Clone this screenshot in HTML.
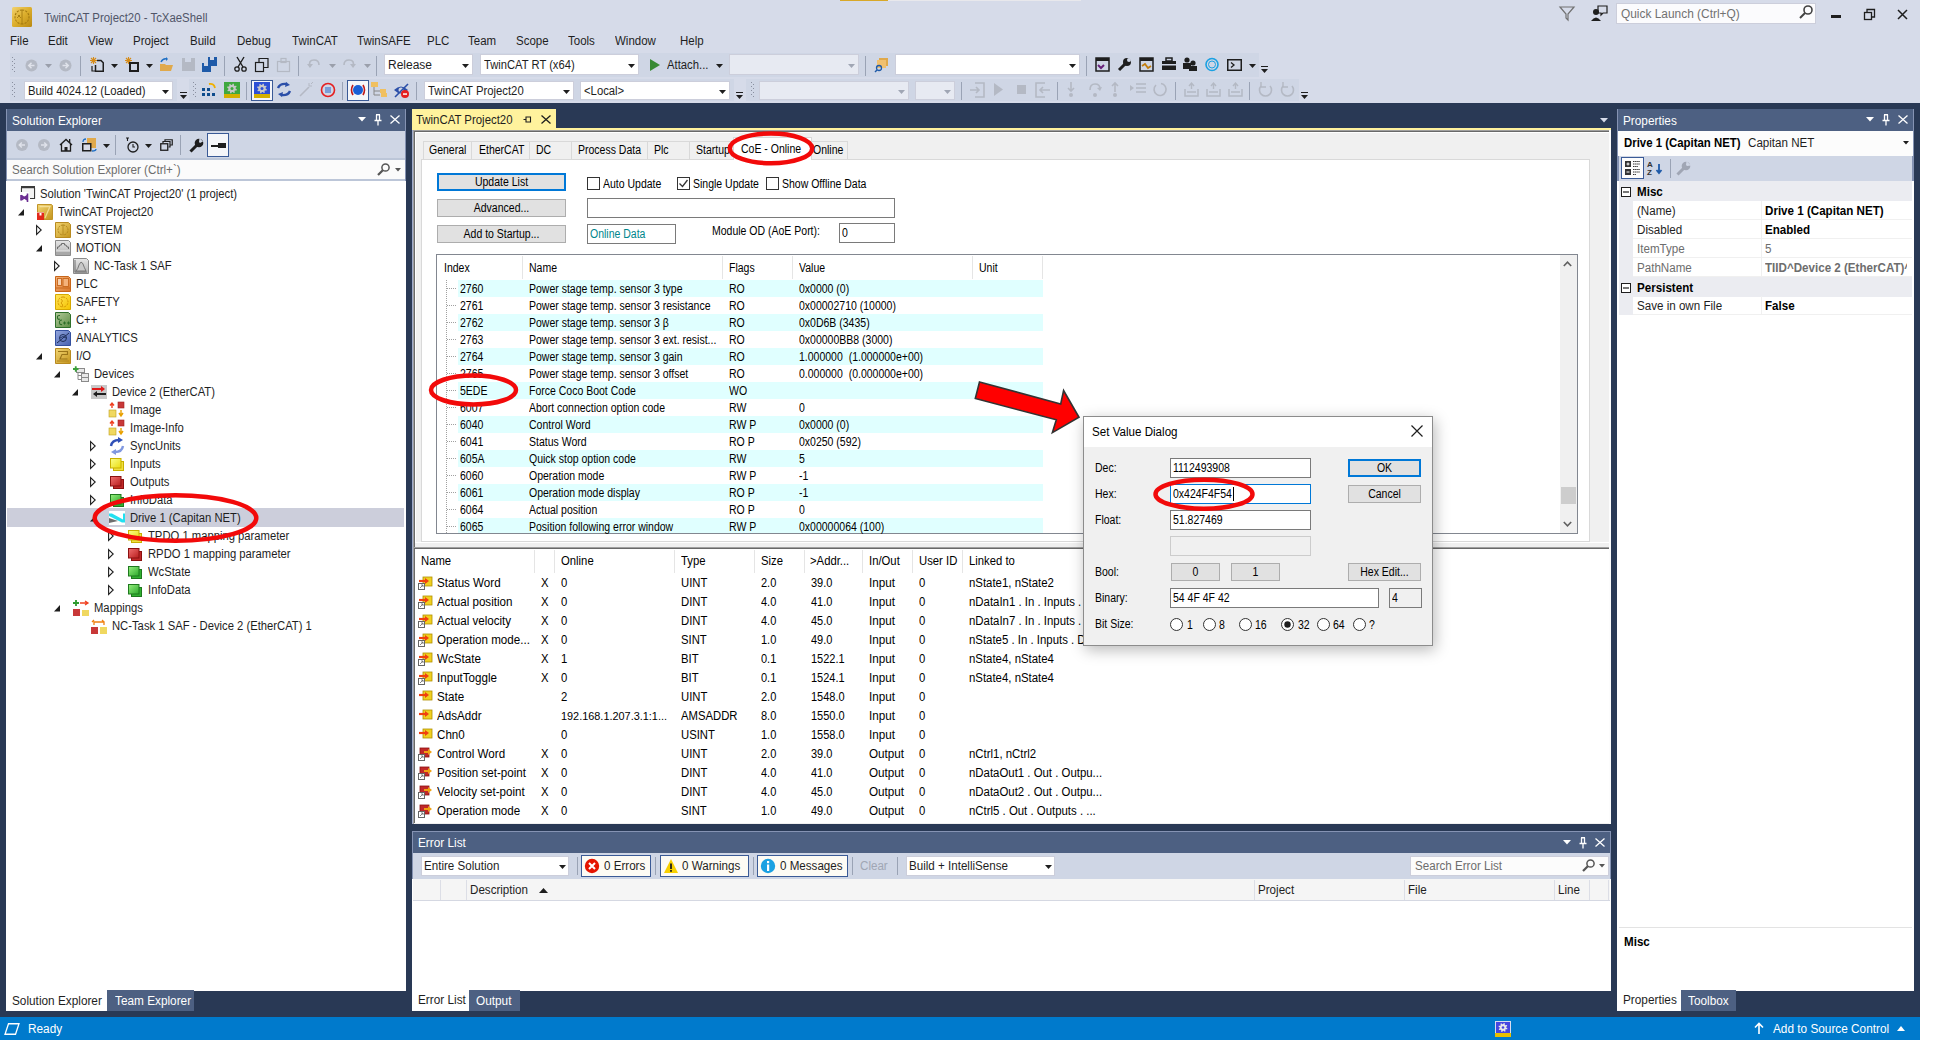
<!DOCTYPE html>
<html><head><meta charset="utf-8"><title>TwinCAT Project20 - TcXaeShell</title>
<style>
html,body{margin:0;padding:0;background:#ffffff;width:1940px;height:1060px;overflow:hidden;}
body{position:relative;font-family:"Liberation Sans",sans-serif;color:#1e1e1e;}
.t{position:absolute;white-space:pre;font-family:"Liberation Sans",sans-serif;}
.r{position:absolute;}
svg.r{overflow:visible;}
</style></head><body>
<div class="r" style="left:0px;top:0px;width:1920px;height:103px;background:#d6dbe9;"></div>
<div class="r" style="left:840px;top:0px;width:48px;height:1px;background:#d8a828;"></div>
<div class="r" style="left:888px;top:0px;width:193px;height:1px;background:#e8e8ec;"></div>
<svg class="r" style="left:12px;top:7px;" width="20" height="20" viewBox="0 0 20 20"><defs><linearGradient id="gApp" x1="0" y1="0" x2="1" y2="1"><stop offset="0" stop-color="#f2d270"/><stop offset="0.5" stop-color="#dcae2c"/><stop offset="1" stop-color="#b88812"/></linearGradient></defs><rect x="0" y="0" width="20" height="20" rx="1.5" fill="url(#gApp)"/><path d="M10 3 A7 7 0 1 0 10 17 M10 3 A7 7 0 0 1 10 17" stroke="#a47a10" stroke-width="1.1" fill="none" stroke-dasharray="2.2 1.2"/><path d="M10 3 V17 M6 8 L9 11 M5 11 L8 8" stroke="#a47a10" stroke-width="0.9"/></svg>
<div class="t" style="left:44px;top:10.0px;line-height:16px;font-size:12px;transform:scaleX(0.9500000000000001);transform-origin:0 50%;color:#505568;">TwinCAT Project20 - TcXaeShell</div>
<svg class="r" style="left:1559px;top:6px;" width="16" height="15" viewBox="0 0 16 15"><path d="M1 1 L15 1 L9 8 L9 14 L7 12 L7 8 Z" fill="none" stroke="#717171" stroke-width="1.2"/></svg>
<svg class="r" style="left:1591px;top:5px;" width="17" height="16" viewBox="0 0 17 16"><circle cx="5" cy="7" r="3" fill="#1e1e1e"/><path d="M0 16 Q5 9 10 16Z" fill="#1e1e1e"/><path d="M7 1 L16 1 L16 8 L12 8 L10 10 L10 8 L7 8Z" fill="none" stroke="#1e1e1e" stroke-width="1.2"/></svg>
<div class="r" style="left:1616px;top:3px;width:200px;height:21px;background:#fbfbfd;border:1px solid #cccedb;box-sizing:border-box;"></div>
<div class="t" style="left:1621px;top:5.5px;line-height:16px;font-size:12px;transform:scaleX(0.9916666666666667);transform-origin:0 50%;color:#717171;">Quick Launch (Ctrl+Q)</div>
<svg class="r" style="left:1799px;top:5px;" width="14" height="14" viewBox="0 0 14 14"><circle cx="9" cy="5" r="4" fill="none" stroke="#424242" stroke-width="1.6"/><path d="M6 8 L1 13" stroke="#424242" stroke-width="2"/></svg>
<div class="r" style="left:1831px;top:15px;width:10px;height:3px;background:#1e1e1e;"></div>
<svg class="r" style="left:1864px;top:9px;" width="11" height="11" viewBox="0 0 11 11"><rect x="0.5" y="3.5" width="7" height="7" fill="none" stroke="#1e1e1e" stroke-width="1.3"/><path d="M3 3 V0.5 H10.5 V8 H8" fill="none" stroke="#1e1e1e" stroke-width="1.3"/></svg>
<svg class="r" style="left:1897px;top:9px;" width="11" height="11" viewBox="0 0 11 11"><path d="M1 1 L10 10 M10 1 L1 10" stroke="#1e1e1e" stroke-width="1.5"/></svg>
<div class="t" style="left:10px;top:33.0px;line-height:16px;font-size:12px;transform:scaleX(0.9583333333333334);transform-origin:0 50%;color:#1e1e1e;">File</div>
<div class="t" style="left:48px;top:33.0px;line-height:16px;font-size:12px;transform:scaleX(0.9583333333333334);transform-origin:0 50%;color:#1e1e1e;">Edit</div>
<div class="t" style="left:88px;top:33.0px;line-height:16px;font-size:12px;transform:scaleX(0.9583333333333334);transform-origin:0 50%;color:#1e1e1e;">View</div>
<div class="t" style="left:133px;top:33.0px;line-height:16px;font-size:12px;transform:scaleX(0.9583333333333334);transform-origin:0 50%;color:#1e1e1e;">Project</div>
<div class="t" style="left:190px;top:33.0px;line-height:16px;font-size:12px;transform:scaleX(0.9583333333333334);transform-origin:0 50%;color:#1e1e1e;">Build</div>
<div class="t" style="left:237px;top:33.0px;line-height:16px;font-size:12px;transform:scaleX(0.9583333333333334);transform-origin:0 50%;color:#1e1e1e;">Debug</div>
<div class="t" style="left:292px;top:33.0px;line-height:16px;font-size:12px;transform:scaleX(0.9583333333333334);transform-origin:0 50%;color:#1e1e1e;">TwinCAT</div>
<div class="t" style="left:357px;top:33.0px;line-height:16px;font-size:12px;transform:scaleX(0.9583333333333334);transform-origin:0 50%;color:#1e1e1e;">TwinSAFE</div>
<div class="t" style="left:427px;top:33.0px;line-height:16px;font-size:12px;transform:scaleX(0.9583333333333334);transform-origin:0 50%;color:#1e1e1e;">PLC</div>
<div class="t" style="left:468px;top:33.0px;line-height:16px;font-size:12px;transform:scaleX(0.9583333333333334);transform-origin:0 50%;color:#1e1e1e;">Team</div>
<div class="t" style="left:516px;top:33.0px;line-height:16px;font-size:12px;transform:scaleX(0.9583333333333334);transform-origin:0 50%;color:#1e1e1e;">Scope</div>
<div class="t" style="left:568px;top:33.0px;line-height:16px;font-size:12px;transform:scaleX(0.9583333333333334);transform-origin:0 50%;color:#1e1e1e;">Tools</div>
<div class="t" style="left:615px;top:33.0px;line-height:16px;font-size:12px;transform:scaleX(0.9583333333333334);transform-origin:0 50%;color:#1e1e1e;">Window</div>
<div class="t" style="left:680px;top:33.0px;line-height:16px;font-size:12px;transform:scaleX(0.9583333333333334);transform-origin:0 50%;color:#1e1e1e;">Help</div>
<div class="r" style="left:10px;top:53px;width:1249px;height:24px;background:#cfd6e5;"></div>
<svg class="r" style="left:11px;top:57px;" width="5" height="16" viewBox="0 0 5 16"><rect x="1" y="0" width="1" height="1" fill="#8a90a0"/><rect x="3" y="2" width="1" height="1" fill="#8a90a0"/><rect x="1" y="4" width="1" height="1" fill="#8a90a0"/><rect x="3" y="6" width="1" height="1" fill="#8a90a0"/><rect x="1" y="8" width="1" height="1" fill="#8a90a0"/><rect x="3" y="10" width="1" height="1" fill="#8a90a0"/><rect x="1" y="12" width="1" height="1" fill="#8a90a0"/><rect x="3" y="14" width="1" height="1" fill="#8a90a0"/></svg>
<svg class="r" style="left:25px;top:59px;" width="13" height="13" viewBox="0 0 13 13"><circle cx="6.5" cy="6.5" r="6" fill="#b4b9c4"/><path d="M9.5 6.5 H4 M6.5 3.8 L3.8 6.5 L6.5 9.2" stroke="#dfe2ea" stroke-width="1.6" fill="none"/></svg>
<svg class="r" style="left:45px;top:64px;" width="7" height="4" viewBox="0 0 7 4"><path d="M0 0 L7 0 L3.5 4Z" fill="#9a9fab"/></svg>
<svg class="r" style="left:59px;top:59px;" width="13" height="13" viewBox="0 0 13 13"><circle cx="6.5" cy="6.5" r="6" fill="#b4b9c4"/><path d="M3.5 6.5 H9 M6.5 3.8 L9.2 6.5 L6.5 9.2" stroke="#dfe2ea" stroke-width="1.6" fill="none"/></svg>
<div class="r" style="left:80px;top:56px;width:1px;height:20px;background:#9aa3b5;"></div>
<svg class="r" style="left:90px;top:57px;" width="14" height="15" viewBox="0 0 14 15"><path d="M3.5 0 V7 M0 3.5 H7 M1 1 L6 6 M6 1 L1 6" stroke="#d68b17" stroke-width="1.1"/><path d="M7 3.5 H11 L13.25 5.75 V14.25 H5.5 V8" fill="none" stroke="#1e1e1e" stroke-width="1.5"/><path d="M2 9 V14 H5" stroke="#1e1e1e" stroke-width="1.2" fill="none"/></svg>
<svg class="r" style="left:111px;top:64px;" width="7" height="4" viewBox="0 0 7 4"><path d="M0 0 L7 0 L3.5 4Z" fill="#1e1e1e"/></svg>
<svg class="r" style="left:125px;top:57px;" width="14" height="15" viewBox="0 0 14 15"><path d="M3.5 0 V7 M0 3.5 H7 M1 1 L6 6 M6 1 L1 6" stroke="#d68b17" stroke-width="1.1"/><rect x="5" y="6" width="8" height="8" fill="none" stroke="#1e1e1e" stroke-width="2"/></svg>
<svg class="r" style="left:146px;top:64px;" width="7" height="4" viewBox="0 0 7 4"><path d="M0 0 L7 0 L3.5 4Z" fill="#1e1e1e"/></svg>
<svg class="r" style="left:159px;top:57px;" width="15" height="15" viewBox="0 0 15 15"><path d="M1 7 H6 L7 8 H14 L12 14 H1Z" fill="#e0a94b"/><path d="M2 5 Q4 1 8 2" stroke="#1e6fc4" stroke-width="1.5" fill="none"/><path d="M7 0 L9 2 L7 4" fill="#1e6fc4"/></svg>
<svg class="r" style="left:182px;top:58px;" width="13" height="13" viewBox="0 0 13 13"><rect x="0" y="0" width="13" height="13" fill="#b4b9c4"/><rect x="3" y="0" width="6" height="4" fill="#cfd6e5"/></svg>
<svg class="r" style="left:202px;top:57px;" width="16" height="15" viewBox="0 0 16 15"><rect x="0" y="6" width="9" height="9" fill="#1e5aa8"/><rect x="6" y="0" width="9" height="9" fill="#1e5aa8"/><rect x="2" y="6" width="4" height="3" fill="#cfd6e5"/><rect x="8" y="0" width="4" height="3" fill="#cfd6e5"/></svg>
<div class="r" style="left:224px;top:56px;width:1px;height:20px;background:#9aa3b5;"></div>
<svg class="r" style="left:234px;top:57px;" width="13" height="15" viewBox="0 0 13 15"><path d="M3 0 L9 10 M10 0 L4 10" stroke="#1e1e1e" stroke-width="1.4"/><circle cx="3" cy="12" r="2.2" fill="none" stroke="#1e1e1e" stroke-width="1.3"/><circle cx="10" cy="12" r="2.2" fill="none" stroke="#1e1e1e" stroke-width="1.3"/></svg>
<svg class="r" style="left:255px;top:58px;" width="14" height="14" viewBox="0 0 14 14"><rect x="0.5" y="4.5" width="8" height="9" fill="none" stroke="#1e1e1e" stroke-width="1.2"/><path d="M4 4 V0.5 H13 V9.5 H9" fill="none" stroke="#1e1e1e" stroke-width="1.2"/></svg>
<svg class="r" style="left:277px;top:58px;" width="14" height="14" viewBox="0 0 14 14"><rect x="0.5" y="3.5" width="12" height="10" fill="none" stroke="#b4b9c4" stroke-width="1.2"/><rect x="4" y="0.5" width="5" height="4" fill="none" stroke="#b4b9c4" stroke-width="1.2"/></svg>
<div class="r" style="left:298px;top:56px;width:1px;height:20px;background:#9aa3b5;"></div>
<svg class="r" style="left:307px;top:58px;" width="14" height="14" viewBox="0 0 14 14"><path d="M3 9 Q1 2 7 2 Q12 2 12 7" fill="none" stroke="#b4b9c4" stroke-width="1.6"/><path d="M0 6 L3 10 L6 6" fill="#b4b9c4"/></svg>
<svg class="r" style="left:329px;top:64px;" width="7" height="4" viewBox="0 0 7 4"><path d="M0 0 L7 0 L3.5 4Z" fill="#9a9fab"/></svg>
<svg class="r" style="left:342px;top:58px;" width="14" height="14" viewBox="0 0 14 14"><path d="M11 9 Q13 2 7 2 Q2 2 2 7" fill="none" stroke="#b4b9c4" stroke-width="1.6"/><path d="M8 6 L11 10 L14 6" fill="#b4b9c4"/></svg>
<svg class="r" style="left:364px;top:64px;" width="7" height="4" viewBox="0 0 7 4"><path d="M0 0 L7 0 L3.5 4Z" fill="#9a9fab"/></svg>
<div class="r" style="left:376px;top:56px;width:1px;height:20px;background:#9aa3b5;"></div>
<div class="r" style="left:384px;top:54px;width:89px;height:21px;background:#ffffff;border:1px solid #cccedb;box-sizing:border-box;"></div>
<div class="t" style="left:388px;top:56.5px;line-height:16px;font-size:12px;color:#1e1e1e;">Release</div>
<svg class="r" style="left:462px;top:63.5px;" width="7" height="4" viewBox="0 0 7 4"><path d="M0 0 L7 0 L3.5 4Z" fill="#1e1e1e"/></svg>
<div class="r" style="left:480px;top:54px;width:159px;height:21px;background:#ffffff;border:1px solid #cccedb;box-sizing:border-box;"></div>
<div class="t" style="left:484px;top:56.5px;line-height:16px;font-size:12px;transform:scaleX(0.9333333333333332);transform-origin:0 50%;color:#1e1e1e;">TwinCAT RT (x64)</div>
<svg class="r" style="left:628px;top:63.5px;" width="7" height="4" viewBox="0 0 7 4"><path d="M0 0 L7 0 L3.5 4Z" fill="#1e1e1e"/></svg>
<svg class="r" style="left:650px;top:59px;" width="10" height="12" viewBox="0 0 10 12"><path d="M0 0 L10 6 L0 12Z" fill="#388a34"/></svg>
<div class="t" style="left:667px;top:57.0px;line-height:16px;font-size:12px;transform:scaleX(0.9416666666666668);transform-origin:0 50%;color:#1e1e1e;">Attach...</div>
<svg class="r" style="left:716px;top:64px;" width="7" height="4" viewBox="0 0 7 4"><path d="M0 0 L7 0 L3.5 4Z" fill="#1e1e1e"/></svg>
<div class="r" style="left:729px;top:54px;width:130px;height:21px;background:#e7eaf2;border:1px solid #cccedb;box-sizing:border-box;"></div>
<svg class="r" style="left:848px;top:63.5px;" width="7" height="4" viewBox="0 0 7 4"><path d="M0 0 L7 0 L3.5 4Z" fill="#a0a6b4"/></svg>
<div class="r" style="left:865px;top:56px;width:1px;height:20px;background:#9aa3b5;"></div>
<svg class="r" style="left:874px;top:57px;" width="15" height="15" viewBox="0 0 15 15"><rect x="5" y="1" width="9" height="8" fill="#e0a94b"/><rect x="3" y="3" width="9" height="8" fill="#f0c070"/><circle cx="5" cy="11" r="2.5" fill="none" stroke="#1e5aa8" stroke-width="1.3"/><path d="M3 13 L1 15" stroke="#1e5aa8" stroke-width="1.5"/></svg>
<div class="r" style="left:895px;top:54px;width:185px;height:21px;background:#ffffff;border:1px solid #cccedb;box-sizing:border-box;"></div>
<svg class="r" style="left:1069px;top:63.5px;" width="7" height="4" viewBox="0 0 7 4"><path d="M0 0 L7 0 L3.5 4Z" fill="#1e1e1e"/></svg>
<div class="r" style="left:1086px;top:56px;width:1px;height:20px;background:#9aa3b5;"></div>
<svg class="r" style="left:1095px;top:57px;" width="15" height="15" viewBox="0 0 15 15"><rect x="1" y="1" width="13" height="13" fill="none" stroke="#1e1e1e" stroke-width="1.5"/><rect x="1" y="1" width="13" height="3" fill="#1e1e1e"/><path d="M3 8 L6 11 L9 8" stroke="#68217a" stroke-width="2" fill="none"/></svg>
<svg class="r" style="left:1117px;top:57px;" width="15" height="15" viewBox="0 0 15 15"><path d="M2 13 L8 7" stroke="#1e1e1e" stroke-width="3"/><circle cx="10" cy="5" r="4" fill="#1e1e1e"/><circle cx="12" cy="3" r="2" fill="#cfd6e5"/></svg>
<svg class="r" style="left:1139px;top:57px;" width="15" height="15" viewBox="0 0 15 15"><rect x="1" y="1" width="13" height="13" fill="none" stroke="#1e1e1e" stroke-width="1.5"/><rect x="1" y="1" width="13" height="3" fill="#1e1e1e"/><path d="M3 9 L6 7 L9 11 L12 9" stroke="#c27d0e" stroke-width="1.8" fill="none"/></svg>
<svg class="r" style="left:1162px;top:58px;" width="14" height="12" viewBox="0 0 14 12"><rect x="0" y="3" width="14" height="9" fill="#1e1e1e"/><rect x="4" y="0" width="6" height="3" fill="none" stroke="#1e1e1e" stroke-width="1.5"/><rect x="0" y="6" width="14" height="1.5" fill="#cfd6e5"/></svg>
<svg class="r" style="left:1183px;top:57px;" width="15" height="14" viewBox="0 0 15 14"><circle cx="4" cy="3" r="2.6" fill="#1e1e1e"/><rect x="0" y="6" width="8" height="6" fill="#1e1e1e"/><circle cx="10" cy="6" r="2.6" fill="#1e1e1e"/><rect x="6" y="9" width="8" height="5" fill="#1e1e1e"/></svg>
<svg class="r" style="left:1205px;top:57px;" width="14" height="15" viewBox="0 0 14 15"><circle cx="7" cy="7.5" r="6" fill="none" stroke="#1ba1e2" stroke-width="1.6"/><circle cx="7" cy="7.5" r="3.5" fill="none" stroke="#1ba1e2" stroke-width="1"/></svg>
<svg class="r" style="left:1227px;top:59px;" width="15" height="12" viewBox="0 0 15 12"><rect x="0.75" y="0.75" width="13.5" height="10.5" fill="none" stroke="#1e1e1e" stroke-width="1.5"/><path d="M4 3.5 L7 6 L4 8.5" stroke="#1e1e1e" stroke-width="1.3" fill="none"/></svg>
<svg class="r" style="left:1249px;top:64px;" width="7" height="4" viewBox="0 0 7 4"><path d="M0 0 L7 0 L3.5 4Z" fill="#1e1e1e"/></svg>
<div class="r" style="left:1259px;top:53px;width:10px;height:24px;background:#d6dbe9;"></div>
<svg class="r" style="left:1260px;top:66px;" width="9" height="9" viewBox="0 0 9 9"><rect x="1" y="0" width="7" height="1" fill="#1e1e1e"/><path d="M1 3 L8 3 L4.5 7Z" fill="#1e1e1e"/></svg>
<div class="r" style="left:10px;top:79px;width:167px;height:22px;background:#cfd6e5;"></div>
<svg class="r" style="left:11px;top:82px;" width="5" height="16" viewBox="0 0 5 16"><rect x="1" y="0" width="1" height="1" fill="#8a90a0"/><rect x="3" y="2" width="1" height="1" fill="#8a90a0"/><rect x="1" y="4" width="1" height="1" fill="#8a90a0"/><rect x="3" y="6" width="1" height="1" fill="#8a90a0"/><rect x="1" y="8" width="1" height="1" fill="#8a90a0"/><rect x="3" y="10" width="1" height="1" fill="#8a90a0"/><rect x="1" y="12" width="1" height="1" fill="#8a90a0"/><rect x="3" y="14" width="1" height="1" fill="#8a90a0"/></svg>
<div class="r" style="left:24px;top:81px;width:149px;height:19px;background:#ffffff;border:1px solid #cccedb;box-sizing:border-box;"></div>
<div class="t" style="left:28px;top:82.5px;line-height:16px;font-size:12px;transform:scaleX(0.9416666666666668);transform-origin:0 50%;color:#1e1e1e;">Build 4024.12 (Loaded)</div>
<svg class="r" style="left:162px;top:89.5px;" width="7" height="4" viewBox="0 0 7 4"><path d="M0 0 L7 0 L3.5 4Z" fill="#1e1e1e"/></svg>
<svg class="r" style="left:179px;top:92px;" width="9" height="9" viewBox="0 0 9 9"><rect x="1" y="0" width="7" height="1" fill="#1e1e1e"/><path d="M1 3 L8 3 L4.5 7Z" fill="#1e1e1e"/></svg>
<div class="r" style="left:189px;top:79px;width:1110px;height:22px;background:#cfd6e5;"></div>
<svg class="r" style="left:192px;top:82px;" width="5" height="16" viewBox="0 0 5 16"><rect x="1" y="0" width="1" height="1" fill="#8a90a0"/><rect x="3" y="2" width="1" height="1" fill="#8a90a0"/><rect x="1" y="4" width="1" height="1" fill="#8a90a0"/><rect x="3" y="6" width="1" height="1" fill="#8a90a0"/><rect x="1" y="8" width="1" height="1" fill="#8a90a0"/><rect x="3" y="10" width="1" height="1" fill="#8a90a0"/><rect x="1" y="12" width="1" height="1" fill="#8a90a0"/><rect x="3" y="14" width="1" height="1" fill="#8a90a0"/></svg>
<svg class="r" style="left:202px;top:82px;" width="15" height="15" viewBox="0 0 15 15"><rect x="0" y="6" width="3" height="3" fill="#0e4c8c"/><rect x="0" y="11" width="3" height="3" fill="#0e4c8c"/><rect x="5" y="11" width="3" height="3" fill="#0e4c8c"/><rect x="10" y="11" width="3" height="3" fill="#0e4c8c"/><rect x="5" y="6" width="3" height="3" fill="#0e4c8c"/><path d="M7 2 Q12 1 13 6" stroke="#f0b000" stroke-width="1.8" fill="none"/></svg>
<svg class="r" style="left:224px;top:82px;" width="16" height="16" viewBox="0 0 16 16"><rect x="0" y="0" width="16" height="13" fill="#3fa83f"/><rect x="0" y="12" width="16" height="4" fill="#d4b000"/><path d="M11.60 6.50 L12.90 7.48 L12.62 8.41 L10.99 8.50 L10.55 9.05 L10.78 10.66 L9.91 11.12 L8.70 10.03 L8.00 10.10 L7.02 11.40 L6.09 11.12 L6.00 9.49 L5.45 9.05 L3.84 9.28 L3.38 8.41 L4.47 7.20 L4.40 6.50 L3.10 5.52 L3.38 4.59 L5.01 4.50 L5.45 3.95 L5.22 2.34 L6.09 1.88 L7.30 2.97 L8.00 2.90 L8.98 1.60 L9.91 1.88 L10.00 3.51 L10.55 3.95 L12.16 3.72 L12.62 4.59 L11.53 5.80Z" fill="#c8c8c8"/><circle cx="8" cy="6.5" r="1.5" fill="#3fa83f"/></svg>
<div class="r" style="left:246px;top:82px;width:1px;height:18px;background:#9aa3b5;"></div>
<div class="r" style="left:251px;top:80px;width:22px;height:21px;background:#f5f6f9;border:1px solid #3a5a96;box-sizing:border-box;"></div>
<svg class="r" style="left:254px;top:82px;" width="16" height="16" viewBox="0 0 16 16"><rect x="0" y="0" width="16" height="13" fill="#2d50d6"/><rect x="0" y="12" width="16" height="4" fill="#d4b000"/><path d="M11.60 6.50 L12.90 7.48 L12.62 8.41 L10.99 8.50 L10.55 9.05 L10.78 10.66 L9.91 11.12 L8.70 10.03 L8.00 10.10 L7.02 11.40 L6.09 11.12 L6.00 9.49 L5.45 9.05 L3.84 9.28 L3.38 8.41 L4.47 7.20 L4.40 6.50 L3.10 5.52 L3.38 4.59 L5.01 4.50 L5.45 3.95 L5.22 2.34 L6.09 1.88 L7.30 2.97 L8.00 2.90 L8.98 1.60 L9.91 1.88 L10.00 3.51 L10.55 3.95 L12.16 3.72 L12.62 4.59 L11.53 5.80Z" fill="#c8c8c8"/><circle cx="8" cy="6.5" r="1.5" fill="#2d50d6"/></svg>
<svg class="r" style="left:277px;top:82px;" width="14" height="15" viewBox="0 0 14 15"><path d="M1 6 Q3 1 10 2" stroke="#2b4fa8" stroke-width="2.4" fill="none"/><path d="M9 0 L13 3 L8 5Z" fill="#2b4fa8"/><path d="M13 9 Q11 14 4 13" stroke="#2b4fa8" stroke-width="2.4" fill="none"/><path d="M5 15 L1 12 L6 10Z" fill="#2b4fa8"/></svg>
<svg class="r" style="left:298px;top:82px;" width="16" height="16" viewBox="0 0 16 16"><path d="M2 14 L11 5" stroke="#b4b9c4" stroke-width="1.6"/><path d="M11 1 V4 M14 4 H11 M13 2 L15 0" stroke="#b4b9c4" stroke-width="1"/></svg>
<svg class="r" style="left:320px;top:82px;" width="16" height="16" viewBox="0 0 16 16"><circle cx="8" cy="8" r="6.5" fill="none" stroke="#e52020" stroke-width="1.6"/><rect x="5" y="5" width="6" height="6" fill="#7a9ed8"/></svg>
<div class="r" style="left:342px;top:82px;width:1px;height:18px;background:#9aa3b5;"></div>
<div class="r" style="left:347px;top:80px;width:22px;height:21px;background:#f5f6f9;border:1px solid #3a5a96;box-sizing:border-box;"></div>
<svg class="r" style="left:350px;top:82px;" width="16" height="16" viewBox="0 0 16 16"><circle cx="8" cy="8" r="5" fill="#1a5fd6"/><path d="M3 3 Q0 8 3 13 M13 3 Q16 8 13 13" stroke="#c01818" stroke-width="1.6" fill="none"/></svg>
<svg class="r" style="left:371px;top:82px;" width="17" height="16" viewBox="0 0 17 16"><rect x="0" y="0" width="7" height="5" fill="#f0c060"/><path d="M3 5 V13 H9 M3 9 H9" stroke="#888" stroke-width="1" fill="none"/><rect x="9" y="7" width="6" height="4" fill="#f0c060"/><rect x="10" y="11" width="6" height="4" fill="#f0c060"/></svg>
<svg class="r" style="left:393px;top:82px;" width="17" height="16" viewBox="0 0 17 16"><path d="M1 8 Q8 1 15 8 Q8 15 1 8Z" fill="#2b4fa8"/><circle cx="8" cy="8" r="2.5" fill="#cfd6e5"/><path d="M2 15 L15 2" stroke="#2b4fa8" stroke-width="1.6"/><circle cx="12" cy="12" r="4" fill="#e52020"/><rect x="10" y="11.3" width="4" height="1.5" fill="#fff"/></svg>
<div class="r" style="left:416px;top:82px;width:1px;height:18px;background:#9aa3b5;"></div>
<div class="r" style="left:424px;top:81px;width:150px;height:19px;background:#ffffff;border:1px solid #cccedb;box-sizing:border-box;"></div>
<div class="t" style="left:428px;top:82.5px;line-height:16px;font-size:12px;transform:scaleX(0.9416666666666668);transform-origin:0 50%;color:#1e1e1e;">TwinCAT Project20</div>
<svg class="r" style="left:563px;top:89.5px;" width="7" height="4" viewBox="0 0 7 4"><path d="M0 0 L7 0 L3.5 4Z" fill="#1e1e1e"/></svg>
<div class="r" style="left:580px;top:81px;width:150px;height:19px;background:#ffffff;border:1px solid #cccedb;box-sizing:border-box;"></div>
<div class="t" style="left:584px;top:82.5px;line-height:16px;font-size:12px;transform:scaleX(0.9416666666666668);transform-origin:0 50%;color:#1e1e1e;">&lt;Local&gt;</div>
<svg class="r" style="left:719px;top:89.5px;" width="7" height="4" viewBox="0 0 7 4"><path d="M0 0 L7 0 L3.5 4Z" fill="#1e1e1e"/></svg>
<div class="r" style="left:734px;top:79px;width:12px;height:22px;background:#d6dbe9;"></div>
<svg class="r" style="left:735px;top:92px;" width="9" height="9" viewBox="0 0 9 9"><rect x="1" y="0" width="7" height="1" fill="#1e1e1e"/><path d="M1 3 L8 3 L4.5 7Z" fill="#1e1e1e"/></svg>
<div class="r" style="left:746px;top:79px;width:553px;height:22px;background:#cfd6e5;"></div>
<svg class="r" style="left:750px;top:82px;" width="5" height="16" viewBox="0 0 5 16"><rect x="1" y="0" width="1" height="1" fill="#8a90a0"/><rect x="3" y="2" width="1" height="1" fill="#8a90a0"/><rect x="1" y="4" width="1" height="1" fill="#8a90a0"/><rect x="3" y="6" width="1" height="1" fill="#8a90a0"/><rect x="1" y="8" width="1" height="1" fill="#8a90a0"/><rect x="3" y="10" width="1" height="1" fill="#8a90a0"/><rect x="1" y="12" width="1" height="1" fill="#8a90a0"/><rect x="3" y="14" width="1" height="1" fill="#8a90a0"/></svg>
<div class="r" style="left:759px;top:81px;width:150px;height:19px;background:#e7eaf2;border:1px solid #cccedb;box-sizing:border-box;"></div>
<svg class="r" style="left:898px;top:89.5px;" width="7" height="4" viewBox="0 0 7 4"><path d="M0 0 L7 0 L3.5 4Z" fill="#a0a6b4"/></svg>
<div class="r" style="left:915px;top:81px;width:40px;height:19px;background:#e7eaf2;border:1px solid #cccedb;box-sizing:border-box;"></div>
<svg class="r" style="left:944px;top:89.5px;" width="7" height="4" viewBox="0 0 7 4"><path d="M0 0 L7 0 L3.5 4Z" fill="#a0a6b4"/></svg>
<div class="r" style="left:961px;top:82px;width:1px;height:18px;background:#9aa3b5;"></div>
<svg class="r" style="left:969px;top:82px;" width="16" height="16" viewBox="0 0 16 16"><path d="M6 1 H15 V15 H6 M1 8 H10 M7 5 L10 8 L7 11" stroke="#b4b9c4" stroke-width="1.6" fill="none"/></svg>
<svg class="r" style="left:994px;top:83px;" width="9" height="13" viewBox="0 0 9 13"><path d="M0 0 L9 6.5 L0 13Z" fill="#b4b9c4"/></svg>
<div class="r" style="left:1017px;top:85px;width:9px;height:9px;background:#b4b9c4;"></div>
<svg class="r" style="left:1035px;top:82px;" width="16" height="16" viewBox="0 0 16 16"><path d="M10 1 H1 V15 H10 M15 8 H5 M8 5 L5 8 L8 11" stroke="#b4b9c4" stroke-width="1.6" fill="none"/></svg>
<div class="r" style="left:1057px;top:82px;width:1px;height:18px;background:#9aa3b5;"></div>
<svg class="r" style="left:1067px;top:82px;" width="8" height="16" viewBox="0 0 8 16"><path d="M4 0 V9 M1 6 L4 9 L7 6" stroke="#b4b9c4" stroke-width="1.6" fill="none"/><circle cx="4" cy="13" r="2" fill="#b4b9c4"/></svg>
<svg class="r" style="left:1088px;top:82px;" width="14" height="16" viewBox="0 0 14 16"><path d="M2 8 Q2 2 7 2 Q12 2 12 7" stroke="#b4b9c4" stroke-width="1.6" fill="none"/><path d="M9 6 L12 9 L14 5" fill="#b4b9c4"/><circle cx="7" cy="13" r="2" fill="#b4b9c4"/></svg>
<svg class="r" style="left:1111px;top:82px;" width="8" height="16" viewBox="0 0 8 16"><path d="M4 10 V1 M1 4 L4 1 L7 4" stroke="#b4b9c4" stroke-width="1.6" fill="none"/><circle cx="4" cy="13" r="2" fill="#b4b9c4"/></svg>
<svg class="r" style="left:1130px;top:83px;" width="16" height="12" viewBox="0 0 16 12"><path d="M0 2 L4 5 L0 8Z" fill="#b4b9c4"/><path d="M6 1 H16 M6 5 H16 M6 9 H16" stroke="#b4b9c4" stroke-width="1.4"/></svg>
<svg class="r" style="left:1153px;top:82px;" width="15" height="15" viewBox="0 0 15 15"><path d="M3 3 A6 6 0 1 0 8 1.5" stroke="#b4b9c4" stroke-width="1.6" fill="none"/></svg>
<div class="r" style="left:1175px;top:82px;width:1px;height:18px;background:#9aa3b5;"></div>
<svg class="r" style="left:1184px;top:83px;" width="15" height="14" viewBox="0 0 15 14"><path d="M1 6 V13 H14 V6 M3 9 H12" stroke="#b4b9c4" stroke-width="1.5" fill="none"/><path d="M7.5 0 V6 M5 3 L7.5 0 L10 3" stroke="#b4b9c4" stroke-width="1.4" fill="none"/></svg>
<svg class="r" style="left:1206px;top:83px;" width="15" height="14" viewBox="0 0 15 14"><path d="M1 6 V13 H14 V6 M3 9 H12" stroke="#b4b9c4" stroke-width="1.5" fill="none"/><path d="M7.5 0 V6 M5 3 L7.5 0 L10 3" stroke="#b4b9c4" stroke-width="1.4" fill="none"/></svg>
<svg class="r" style="left:1228px;top:83px;" width="15" height="14" viewBox="0 0 15 14"><path d="M1 6 V13 H14 V6 M3 9 H12" stroke="#b4b9c4" stroke-width="1.5" fill="none"/><path d="M7.5 0 V6 M5 3 L7.5 0 L10 3" stroke="#b4b9c4" stroke-width="1.4" fill="none"/></svg>
<div class="r" style="left:1249px;top:82px;width:1px;height:18px;background:#9aa3b5;"></div>
<svg class="r" style="left:1258px;top:82px;" width="15" height="15" viewBox="0 0 15 15"><path d="M3 4 A6 6 0 1 0 12 4" stroke="#b4b9c4" stroke-width="1.6" fill="none"/><path d="M3 0 V5 H8" stroke="#b4b9c4" stroke-width="1.4" fill="none"/></svg>
<svg class="r" style="left:1280px;top:82px;" width="15" height="15" viewBox="0 0 15 15"><path d="M3 4 A6 6 0 1 0 12 4" stroke="#b4b9c4" stroke-width="1.6" fill="none"/><path d="M3 0 V5 H8" stroke="#b4b9c4" stroke-width="1.4" fill="none"/></svg>
<div class="r" style="left:1299px;top:79px;width:12px;height:22px;background:#d6dbe9;"></div>
<svg class="r" style="left:1300px;top:92px;" width="9" height="9" viewBox="0 0 9 9"><rect x="1" y="0" width="7" height="1" fill="#1e1e1e"/><path d="M1 3 L8 3 L4.5 7Z" fill="#1e1e1e"/></svg>
<div class="r" style="left:0px;top:103px;width:1920px;height:914px;background:#293955;"></div>
<div class="r" style="left:6px;top:109px;width:400px;height:72px;background:#8593b3;"></div>
<div class="r" style="left:6px;top:181px;width:400px;height:810px;background:#ffffff;"></div>
<div class="r" style="left:7px;top:110px;width:398px;height:21px;background:#4d6082;"></div>
<div class="r" style="left:7px;top:109px;width:398px;height:22px;background:#4d6082;"></div>
<div class="t" style="left:12px;top:112.5px;line-height:16px;font-size:12px;transform:scaleX(0.9833333333333334);transform-origin:0 50%;color:#ffffff;">Solution Explorer</div>
<svg class="r" style="left:358px;top:117px;" width="8" height="5" viewBox="0 0 8 5"><path d="M0 0 L8 0 L4 4.5Z" fill="#ffffff"/></svg>
<svg class="r" style="left:374px;top:114px;" width="8" height="12" viewBox="0 0 8 12"><path d="M2 0.75 H6 M2.5 0.75 V6.5 M5.5 0.75 V6.5 M0.5 6.5 H7.5 M4 6.5 V11.5" stroke="#ffffff" stroke-width="1.3" fill="none"/></svg>
<svg class="r" style="left:390px;top:115px;" width="10" height="9" viewBox="0 0 10 9"><path d="M0.5 0.5 L9.5 8.5 M9.5 0.5 L0.5 8.5" stroke="#ffffff" stroke-width="1.3"/></svg>
<div class="r" style="left:7px;top:131px;width:398px;height:28px;background:#cfd6e5;"></div>
<div class="r" style="left:7px;top:158px;width:398px;height:2px;background:#bcc6d8;"></div>
<svg class="r" style="left:16px;top:139px;" width="12" height="12" viewBox="0 0 12 12"><circle cx="6" cy="6" r="6" fill="#b4b9c4"/><path d="M9 6 H3.5 M5.8 3.5 L3.3 6 L5.8 8.5" stroke="#dfe2ea" stroke-width="1.5" fill="none"/></svg>
<svg class="r" style="left:38px;top:139px;" width="12" height="12" viewBox="0 0 12 12"><circle cx="6" cy="6" r="6" fill="#b4b9c4"/><path d="M3 6 H8.5 M6.2 3.5 L8.7 6 L6.2 8.5" stroke="#dfe2ea" stroke-width="1.5" fill="none"/></svg>
<svg class="r" style="left:59px;top:138px;" width="14" height="14" viewBox="0 0 14 14"><path d="M1 7 L7 1.5 L13 7" stroke="#1e1e1e" stroke-width="1.4" fill="none"/><path d="M2.5 6 V13 H11.5 V6" stroke="#1e1e1e" stroke-width="1.3" fill="#d8dbe6"/><rect x="5.5" y="9" width="3" height="4" fill="#1e1e1e"/><rect x="10" y="1" width="1.3" height="4" fill="#1e1e1e"/></svg>
<svg class="r" style="left:82px;top:138px;" width="15" height="14" viewBox="0 0 15 14"><rect x="5" y="0" width="9" height="10" fill="#e0a94b"/><rect x="0.75" y="5.75" width="8" height="7" fill="#d8dbe6" stroke="#1e1e1e" stroke-width="1.5"/><path d="M1 4 Q1 1 4 1" stroke="#1e6fc4" stroke-width="1.3" fill="none"/><path d="M14 11 Q14 13 10 13" stroke="#1e6fc4" stroke-width="1.3" fill="none"/></svg>
<svg class="r" style="left:103px;top:144px;" width="7" height="4" viewBox="0 0 7 4"><path d="M0 0 L7 0 L3.5 4Z" fill="#1e1e1e"/></svg>
<div class="r" style="left:115px;top:135px;width:1px;height:20px;background:#9aa3b5;"></div>
<svg class="r" style="left:125px;top:137px;" width="14" height="16" viewBox="0 0 14 16"><circle cx="8" cy="10" r="5" fill="none" stroke="#1e1e1e" stroke-width="1.3"/><path d="M8 7 V10 H10" stroke="#1e1e1e" stroke-width="1.1" fill="none"/><path d="M1 1 H4 M2.5 1 V4" stroke="#1e1e1e" stroke-width="1.1"/></svg>
<svg class="r" style="left:145px;top:144px;" width="7" height="4" viewBox="0 0 7 4"><path d="M0 0 L7 0 L3.5 4Z" fill="#1e1e1e"/></svg>
<svg class="r" style="left:160px;top:139px;" width="13" height="12" viewBox="0 0 13 12"><rect x="0.75" y="4.75" width="7" height="6.5" fill="none" stroke="#1e1e1e" stroke-width="1.3"/><path d="M3 4 V2.5 H10 V8 H8.5 M5 2 V0.75 H12.25 V6 H10.5" stroke="#1e1e1e" stroke-width="1.2" fill="none"/></svg>
<div class="r" style="left:180px;top:135px;width:1px;height:20px;background:#9aa3b5;"></div>
<svg class="r" style="left:189px;top:138px;" width="15" height="15" viewBox="0 0 15 15"><path d="M1.5 13.5 L8 7" stroke="#1e1e1e" stroke-width="3"/><circle cx="10" cy="5" r="4.3" fill="#1e1e1e"/><path d="M10.5 0 L14 3.5 L11 5 L10 4Z" fill="#cfd6e5"/></svg>
<div class="r" style="left:207px;top:133px;width:22px;height:24px;background:#f5f6f9;border:1px solid #3a5a96;box-sizing:border-box;"></div>
<div class="r" style="left:211px;top:145px;width:15px;height:2px;background:#1e1e1e;"></div>
<div class="r" style="left:218px;top:143px;width:8px;height:5px;background:#1e1e1e;"></div>
<div class="r" style="left:7px;top:160px;width:398px;height:19px;background:#fbfbfb;"></div>
<div class="r" style="left:7px;top:179px;width:398px;height:2px;background:#bcc6d8;"></div>
<div class="t" style="left:12px;top:162.0px;line-height:16px;font-size:12px;transform:scaleX(0.9708333333333333);transform-origin:0 50%;color:#6d6d6d;">Search Solution Explorer (Ctrl+`)</div>
<svg class="r" style="left:377px;top:163px;" width="13" height="13" viewBox="0 0 13 13"><circle cx="8.5" cy="4.5" r="3.6" fill="none" stroke="#555" stroke-width="1.5"/><path d="M5.8 7.2 L1 12" stroke="#555" stroke-width="2.2"/></svg>
<svg class="r" style="left:395px;top:168px;" width="6" height="4" viewBox="0 0 6 4"><path d="M0 0 L6 0 L3 3.5Z" fill="#555"/></svg>
<div class="r" style="left:7px;top:181px;width:398px;height:809px;background:#ffffff;"></div>
<div class="r" style="left:7px;top:508px;width:397px;height:19px;background:#cccedb;"></div>
<svg width="0" height="0" style="position:absolute"><defs><linearGradient id="gGold" x1="0" y1="0" x2="1" y2="1"><stop offset="0" stop-color="#f3d673"/><stop offset="1" stop-color="#c3941c"/></linearGradient><linearGradient id="gGray" x1="0" y1="0" x2="0" y2="1"><stop offset="0" stop-color="#e6e6e6"/><stop offset="1" stop-color="#b4b4b4"/></linearGradient><linearGradient id="gOrange" x1="0" y1="0" x2="1" y2="1"><stop offset="0" stop-color="#f4b27a"/><stop offset="1" stop-color="#d9772a"/></linearGradient><linearGradient id="gYellow" x1="0" y1="0" x2="1" y2="1"><stop offset="0" stop-color="#ffe45a"/><stop offset="1" stop-color="#f5c400"/></linearGradient><linearGradient id="gGreen" x1="0" y1="0" x2="1" y2="1"><stop offset="0" stop-color="#b3c99a"/><stop offset="1" stop-color="#5d8f45"/></linearGradient><linearGradient id="gBlue" x1="0" y1="0" x2="1" y2="1"><stop offset="0" stop-color="#93a6dd"/><stop offset="1" stop-color="#4660b0"/></linearGradient><linearGradient id="gSY" x1="0" y1="0" x2="1" y2="1"><stop offset="0" stop-color="#faff8a"/><stop offset="1" stop-color="#eadc10"/></linearGradient><linearGradient id="gSR" x1="0" y1="0" x2="1" y2="1"><stop offset="0" stop-color="#f07070"/><stop offset="1" stop-color="#b81c1c"/></linearGradient><linearGradient id="gSG" x1="0" y1="0" x2="1" y2="1"><stop offset="0" stop-color="#98f080"/><stop offset="1" stop-color="#2aa82a"/></linearGradient></defs></svg>
<svg class="r" style="left:20px;top:186px;" width="16" height="16" viewBox="0 0 16 16"><rect x="1" y="0" width="14" height="2.5" fill="#3a3a3a"/><path d="M1.5 2 V6 M14.5 2 V12.5 H10" stroke="#3a3a3a" stroke-width="1.2" fill="none"/><rect x="2" y="2.5" width="12" height="9.5" fill="#f3f3f3"/><rect x="0" y="6" width="9" height="10" fill="#ffffff"/><path d="M1 9 V14.5 M1.2 9.5 L7.5 14 M1.2 14 L7.5 9.5 M7.5 7.5 V16" stroke="#6a2d91" stroke-width="1.6" fill="none"/></svg>
<div class="t" style="left:40px;top:185.5px;line-height:16px;font-size:12px;transform:scaleX(0.9375);transform-origin:0 50%;color:#1e1e1e;">Solution &#x27;TwinCAT Project20&#x27; (1 project)</div>
<svg class="r" style="left:18px;top:209.0px;" width="6" height="7" viewBox="0 0 6 7"><path d="M6 0 L6 6.5 L0 6.5Z" fill="#1e1e1e"/></svg>
<svg class="r" style="left:37px;top:204px;" width="16" height="16" viewBox="0 0 16 16"><path d="M0.5 0.5 H14.5 L15.5 1.5 V15.5 H0.5Z" fill="url(#gGold)" stroke="#c09428" stroke-width="1"/><path d="M2.5 2.5 H13 L8 14" stroke="#f8e6a8" stroke-width="1.3" fill="none" opacity="0.8"/><rect x="0" y="8" width="7" height="8" fill="#e2291a"/><rect x="2.5" y="9" width="2" height="2.5" fill="#ffffff"/><rect x="0" y="8" width="7" height="1" fill="#f0a090"/></svg>
<div class="t" style="left:58px;top:203.5px;line-height:16px;font-size:12px;transform:scaleX(0.9375);transform-origin:0 50%;color:#1e1e1e;">TwinCAT Project20</div>
<svg class="r" style="left:35.5px;top:224.5px;" width="6" height="10" viewBox="0 0 6 10"><path d="M0.6 0.6 L5.2 5 L0.6 9.4Z" fill="none" stroke="#1e1e1e" stroke-width="1.1"/></svg>
<svg class="r" style="left:55px;top:222px;" width="16" height="16" viewBox="0 0 16 16"><path d="M0.5 0.5 H13.5 L15.5 2.5 V15.5 H0.5Z" fill="url(#gGold)" stroke="#b88a20" stroke-width="1"/><path d="M8 3 A5 5 0 1 0 8 13 M8 3 A5 5 0 0 1 8 13" stroke="#b0851c" stroke-width="1" fill="none" stroke-dasharray="2 1"/><path d="M8 3 V13" stroke="#b0851c" stroke-width="0.8"/></svg>
<div class="t" style="left:76px;top:221.5px;line-height:16px;font-size:12px;transform:scaleX(0.9375);transform-origin:0 50%;color:#1e1e1e;">SYSTEM</div>
<svg class="r" style="left:36px;top:245.0px;" width="6" height="7" viewBox="0 0 6 7"><path d="M6 0 L6 6.5 L0 6.5Z" fill="#1e1e1e"/></svg>
<svg class="r" style="left:55px;top:240px;" width="16" height="16" viewBox="0 0 16 16"><path d="M0.5 0.5 H13.5 L15.5 2.5 V15.5 H0.5Z" fill="url(#gGray)" stroke="#8a8a8a" stroke-width="1"/><path d="M2.5 9 V7 H4 L5 5 H6.5 V3.5 H9.5 V5 H11 L12 7 H13.5 V9" stroke="#6e6e6e" stroke-width="1" fill="none"/><rect x="1" y="11" width="14" height="4" fill="#a8a8a8"/><path d="M1 11 H15" stroke="#e8e8e8" stroke-width="1"/></svg>
<div class="t" style="left:76px;top:239.5px;line-height:16px;font-size:12px;transform:scaleX(0.9375);transform-origin:0 50%;color:#1e1e1e;">MOTION</div>
<svg class="r" style="left:53.5px;top:260.5px;" width="6" height="10" viewBox="0 0 6 10"><path d="M0.6 0.6 L5.2 5 L0.6 9.4Z" fill="none" stroke="#1e1e1e" stroke-width="1.1"/></svg>
<svg class="r" style="left:73px;top:258px;" width="16" height="16" viewBox="0 0 16 16"><path d="M0.5 0.5 H13.5 L15.5 2.5 V15.5 H0.5Z" fill="url(#gGray)" stroke="#8a8a8a" stroke-width="1"/><path d="M2 14 V2 M2 14 H14" stroke="#666" stroke-width="0.9"/><path d="M3 13 Q5 11 6 7 Q8 2 10 6 Q11 9 13 13Z" fill="#c8c8c8" stroke="#6e6e6e" stroke-width="0.9"/></svg>
<div class="t" style="left:94px;top:257.5px;line-height:16px;font-size:12px;transform:scaleX(0.9375);transform-origin:0 50%;color:#1e1e1e;">NC-Task 1 SAF</div>
<svg class="r" style="left:55px;top:276px;" width="16" height="16" viewBox="0 0 16 16"><path d="M0.5 0.5 H13.5 L15.5 2.5 V15.5 H0.5Z" fill="url(#gOrange)" stroke="#c8661a" stroke-width="1"/><rect x="2.5" y="2.5" width="4" height="7" fill="#f8d2b0" stroke="#c8661a" stroke-width="0.9"/><rect x="8" y="2.5" width="5.5" height="8" fill="#f4b27a" stroke="#c8661a" stroke-width="0.9"/><rect x="1" y="11.5" width="14" height="1" fill="#c8661a"/></svg>
<div class="t" style="left:76px;top:275.5px;line-height:16px;font-size:12px;transform:scaleX(0.9375);transform-origin:0 50%;color:#1e1e1e;">PLC</div>
<svg class="r" style="left:55px;top:294px;" width="16" height="16" viewBox="0 0 16 16"><path d="M0.5 0.5 H13.5 L15.5 2.5 V15.5 H0.5Z" fill="url(#gYellow)" stroke="#d6a800" stroke-width="1"/><path d="M8 3 A5 5 0 1 0 8 13 M8 3 A5 5 0 0 1 8 13" stroke="#d49400" stroke-width="1" fill="none" stroke-dasharray="2 1"/><path d="M6 5 Q9 7 6 9 Q9 11 7 13" stroke="#d49400" stroke-width="0.9" fill="none"/></svg>
<div class="t" style="left:76px;top:293.5px;line-height:16px;font-size:12px;transform:scaleX(0.9375);transform-origin:0 50%;color:#1e1e1e;">SAFETY</div>
<svg class="r" style="left:55px;top:312px;" width="16" height="16" viewBox="0 0 16 16"><path d="M0.5 0.5 H13.5 L15.5 2.5 V15.5 H0.5Z" fill="url(#gGreen)" stroke="#2f6f2a" stroke-width="1"/><path d="M5 3.5 Q2 3 2.5 6 Q3 8 5 7" stroke="#2f6f2a" stroke-width="1.1" fill="none"/><path d="M7 8 Q4 8 4.5 11 Q5 13 7 12.5" stroke="#2f6f2a" stroke-width="1.1" fill="none"/><path d="M8 11 H11 M9.5 9.5 V12.5 M12 11 H15 M13.5 9.5 V12.5" stroke="#2f6f2a" stroke-width="1"/></svg>
<div class="t" style="left:76px;top:311.5px;line-height:16px;font-size:12px;transform:scaleX(0.9375);transform-origin:0 50%;color:#1e1e1e;">C++</div>
<svg class="r" style="left:55px;top:330px;" width="16" height="16" viewBox="0 0 16 16"><path d="M0.5 0.5 H13.5 L15.5 2.5 V15.5 H0.5Z" fill="url(#gBlue)" stroke="#34509e" stroke-width="1"/><circle cx="8" cy="8" r="3.5" fill="none" stroke="#1e2e58" stroke-width="1"/><path d="M2 13 L14 3" stroke="#1e2e58" stroke-width="1"/><path d="M5 8 Q8 5 11 8" stroke="#1e2e58" stroke-width="0.9" fill="none"/></svg>
<div class="t" style="left:76px;top:329.5px;line-height:16px;font-size:12px;transform:scaleX(0.9375);transform-origin:0 50%;color:#1e1e1e;">ANALYTICS</div>
<svg class="r" style="left:36px;top:353.0px;" width="6" height="7" viewBox="0 0 6 7"><path d="M6 0 L6 6.5 L0 6.5Z" fill="#1e1e1e"/></svg>
<svg class="r" style="left:55px;top:348px;" width="16" height="16" viewBox="0 0 16 16"><path d="M0.5 0.5 H13.5 L15.5 2.5 V15.5 H0.5Z" fill="url(#gGold)" stroke="#b88a20" stroke-width="1"/><path d="M3 3.5 H12.5 V6.5 H7 L5 11 H12.5" stroke="#9a7418" stroke-width="1.1" fill="none"/><rect x="2" y="12" width="12" height="2" fill="#b88a20" opacity="0.6"/></svg>
<div class="t" style="left:76px;top:347.5px;line-height:16px;font-size:12px;transform:scaleX(0.9375);transform-origin:0 50%;color:#1e1e1e;">I/O</div>
<svg class="r" style="left:54px;top:371.0px;" width="6" height="7" viewBox="0 0 6 7"><path d="M6 0 L6 6.5 L0 6.5Z" fill="#1e1e1e"/></svg>
<svg class="r" style="left:73px;top:366px;" width="16" height="16" viewBox="0 0 16 16"><path d="M5 6 V13.5 H9 M5 9.5 H9" stroke="#8a8a8a" fill="none"/><rect x="3.5" y="2.5" width="8" height="4" fill="#e8e8e8" stroke="#8a8a8a"/><rect x="8.5" y="7.5" width="7" height="4" fill="#e8e8e8" stroke="#8a8a8a"/><rect x="8.5" y="11.5" width="7" height="4" fill="#e8e8e8" stroke="#8a8a8a"/><path d="M0 3 H5.5 M2.75 0.25 V5.75" stroke="#3aa03a" stroke-width="1.8"/></svg>
<div class="t" style="left:94px;top:365.5px;line-height:16px;font-size:12px;transform:scaleX(0.9375);transform-origin:0 50%;color:#1e1e1e;">Devices</div>
<svg class="r" style="left:72px;top:389.0px;" width="6" height="7" viewBox="0 0 6 7"><path d="M6 0 L6 6.5 L0 6.5Z" fill="#1e1e1e"/></svg>
<svg class="r" style="left:91px;top:384px;" width="16" height="16" viewBox="0 0 16 16"><rect x="0" y="1" width="16" height="14" fill="#c8c8c8"/><path d="M1 5 H13" stroke="#e01818" stroke-width="2"/><path d="M10 2 L14 5 L10 8Z" fill="#e01818"/><path d="M4 10 H15" stroke="#1e1e1e" stroke-width="2"/><path d="M6 7 L2 10 L6 13Z" fill="#1e1e1e"/></svg>
<div class="t" style="left:112px;top:383.5px;line-height:16px;font-size:12px;transform:scaleX(0.9375);transform-origin:0 50%;color:#1e1e1e;">Device 2 (EtherCAT)</div>
<svg class="r" style="left:109px;top:402px;" width="16" height="16" viewBox="0 0 16 16"><rect x="9" y="0" width="6" height="6" fill="#c83838" stroke="#a02020" stroke-width="0.6"/><rect x="0" y="8" width="7" height="7" fill="#f0d860" stroke="#c0a020" stroke-width="0.6"/><path d="M3 6 V2 M1 3.5 L3 1 L5 3.5" stroke="#f04020" stroke-width="1.4" fill="none"/><path d="M12 8 V13 M10 11 L12 14 L14 11" stroke="#e8a000" stroke-width="1.4" fill="none"/></svg>
<div class="t" style="left:130px;top:401.5px;line-height:16px;font-size:12px;transform:scaleX(0.9375);transform-origin:0 50%;color:#1e1e1e;">Image</div>
<svg class="r" style="left:109px;top:420px;" width="16" height="16" viewBox="0 0 16 16"><rect x="9" y="0" width="6" height="6" fill="#c83838" stroke="#a02020" stroke-width="0.6"/><rect x="0" y="8" width="7" height="7" fill="#f0d860" stroke="#c0a020" stroke-width="0.6"/><path d="M3 6 V2 M1 3.5 L3 1 L5 3.5" stroke="#f04020" stroke-width="1.4" fill="none"/><path d="M12 8 V13 M10 11 L12 14 L14 11" stroke="#e8a000" stroke-width="1.4" fill="none"/></svg>
<div class="t" style="left:130px;top:419.5px;line-height:16px;font-size:12px;transform:scaleX(0.9375);transform-origin:0 50%;color:#1e1e1e;">Image-Info</div>
<svg class="r" style="left:89.5px;top:440.5px;" width="6" height="10" viewBox="0 0 6 10"><path d="M0.6 0.6 L5.2 5 L0.6 9.4Z" fill="none" stroke="#1e1e1e" stroke-width="1.1"/></svg>
<svg class="r" style="left:109px;top:438px;" width="16" height="16" viewBox="0 0 16 16"><path d="M2 8 Q3 2 10 2" stroke="#3050b8" stroke-width="2.4" fill="none"/><path d="M9 -1 L14 2 L9 5Z" fill="#3050b8"/><path d="M14 8 Q13 14 6 14" stroke="#8098e0" stroke-width="2.4" fill="none"/><path d="M7 11 L2 14 L7 17Z" fill="#8098e0"/></svg>
<div class="t" style="left:130px;top:437.5px;line-height:16px;font-size:12px;transform:scaleX(0.9375);transform-origin:0 50%;color:#1e1e1e;">SyncUnits</div>
<svg class="r" style="left:89.5px;top:458.5px;" width="6" height="10" viewBox="0 0 6 10"><path d="M0.6 0.6 L5.2 5 L0.6 9.4Z" fill="none" stroke="#1e1e1e" stroke-width="1.1"/></svg>
<svg class="r" style="left:109px;top:456px;" width="16" height="16" viewBox="0 0 16 16"><rect x="4.5" y="5.5" width="10" height="9" fill="#f0e040" stroke="#c8b000" stroke-width="1"/><rect x="1.5" y="2.5" width="10.5" height="9.5" fill="url(#gSY)" stroke="#c8b000" stroke-width="1"/></svg>
<div class="t" style="left:130px;top:455.5px;line-height:16px;font-size:12px;transform:scaleX(0.9375);transform-origin:0 50%;color:#1e1e1e;">Inputs</div>
<svg class="r" style="left:89.5px;top:476.5px;" width="6" height="10" viewBox="0 0 6 10"><path d="M0.6 0.6 L5.2 5 L0.6 9.4Z" fill="none" stroke="#1e1e1e" stroke-width="1.1"/></svg>
<svg class="r" style="left:109px;top:474px;" width="16" height="16" viewBox="0 0 16 16"><rect x="4.5" y="5.5" width="10" height="9" fill="#c02828" stroke="#8a1010" stroke-width="1"/><rect x="1.5" y="2.5" width="10.5" height="9.5" fill="url(#gSR)" stroke="#8a1010" stroke-width="1"/></svg>
<div class="t" style="left:130px;top:473.5px;line-height:16px;font-size:12px;transform:scaleX(0.9375);transform-origin:0 50%;color:#1e1e1e;">Outputs</div>
<svg class="r" style="left:89.5px;top:494.5px;" width="6" height="10" viewBox="0 0 6 10"><path d="M0.6 0.6 L5.2 5 L0.6 9.4Z" fill="none" stroke="#1e1e1e" stroke-width="1.1"/></svg>
<svg class="r" style="left:109px;top:492px;" width="16" height="16" viewBox="0 0 16 16"><rect x="4.5" y="5.5" width="10" height="9" fill="#30b030" stroke="#1e781e" stroke-width="1"/><rect x="1.5" y="2.5" width="10.5" height="9.5" fill="url(#gSG)" stroke="#1e781e" stroke-width="1"/></svg>
<div class="t" style="left:130px;top:491.5px;line-height:16px;font-size:12px;transform:scaleX(0.9375);transform-origin:0 50%;color:#1e1e1e;">InfoData</div>
<svg class="r" style="left:90px;top:515.0px;" width="6" height="7" viewBox="0 0 6 7"><path d="M6 0 L6 6.5 L0 6.5Z" fill="#1e1e1e"/></svg>
<svg class="r" style="left:109px;top:510px;" width="16" height="16" viewBox="0 0 16 16"><rect x="0" y="1" width="16" height="14" fill="#ffffff"/><path d="M0 3.5 L3 3.5 L14 9.5 L14 3.5 L16 3.5 L16 12.5 L13 12.5 L0 6Z" fill="#22e0f0"/><path d="M0 8 L9 11 L0 13Z" fill="#6e6e6e"/></svg>
<div class="t" style="left:130px;top:509.5px;line-height:16px;font-size:12px;transform:scaleX(0.9375);transform-origin:0 50%;color:#1e1e1e;">Drive 1 (Capitan NET)</div>
<svg class="r" style="left:107.5px;top:530.5px;" width="6" height="10" viewBox="0 0 6 10"><path d="M0.6 0.6 L5.2 5 L0.6 9.4Z" fill="none" stroke="#1e1e1e" stroke-width="1.1"/></svg>
<svg class="r" style="left:127px;top:528px;" width="16" height="16" viewBox="0 0 16 16"><rect x="4.5" y="5.5" width="10" height="9" fill="#f0e040" stroke="#c8b000" stroke-width="1"/><rect x="1.5" y="2.5" width="10.5" height="9.5" fill="url(#gSY)" stroke="#c8b000" stroke-width="1"/></svg>
<div class="t" style="left:148px;top:527.5px;line-height:16px;font-size:12px;transform:scaleX(0.9375);transform-origin:0 50%;color:#1e1e1e;">TPDO 1 mapping parameter</div>
<svg class="r" style="left:107.5px;top:548.5px;" width="6" height="10" viewBox="0 0 6 10"><path d="M0.6 0.6 L5.2 5 L0.6 9.4Z" fill="none" stroke="#1e1e1e" stroke-width="1.1"/></svg>
<svg class="r" style="left:127px;top:546px;" width="16" height="16" viewBox="0 0 16 16"><rect x="4.5" y="5.5" width="10" height="9" fill="#c02828" stroke="#8a1010" stroke-width="1"/><rect x="1.5" y="2.5" width="10.5" height="9.5" fill="url(#gSR)" stroke="#8a1010" stroke-width="1"/></svg>
<div class="t" style="left:148px;top:545.5px;line-height:16px;font-size:12px;transform:scaleX(0.9375);transform-origin:0 50%;color:#1e1e1e;">RPDO 1 mapping parameter</div>
<svg class="r" style="left:107.5px;top:566.5px;" width="6" height="10" viewBox="0 0 6 10"><path d="M0.6 0.6 L5.2 5 L0.6 9.4Z" fill="none" stroke="#1e1e1e" stroke-width="1.1"/></svg>
<svg class="r" style="left:127px;top:564px;" width="16" height="16" viewBox="0 0 16 16"><rect x="4.5" y="5.5" width="10" height="9" fill="#30b030" stroke="#1e781e" stroke-width="1"/><rect x="1.5" y="2.5" width="10.5" height="9.5" fill="url(#gSG)" stroke="#1e781e" stroke-width="1"/></svg>
<div class="t" style="left:148px;top:563.5px;line-height:16px;font-size:12px;transform:scaleX(0.9375);transform-origin:0 50%;color:#1e1e1e;">WcState</div>
<svg class="r" style="left:107.5px;top:584.5px;" width="6" height="10" viewBox="0 0 6 10"><path d="M0.6 0.6 L5.2 5 L0.6 9.4Z" fill="none" stroke="#1e1e1e" stroke-width="1.1"/></svg>
<svg class="r" style="left:127px;top:582px;" width="16" height="16" viewBox="0 0 16 16"><rect x="4.5" y="5.5" width="10" height="9" fill="#30b030" stroke="#1e781e" stroke-width="1"/><rect x="1.5" y="2.5" width="10.5" height="9.5" fill="url(#gSG)" stroke="#1e781e" stroke-width="1"/></svg>
<div class="t" style="left:148px;top:581.5px;line-height:16px;font-size:12px;transform:scaleX(0.9375);transform-origin:0 50%;color:#1e1e1e;">InfoData</div>
<svg class="r" style="left:54px;top:605.0px;" width="6" height="7" viewBox="0 0 6 7"><path d="M6 0 L6 6.5 L0 6.5Z" fill="#1e1e1e"/></svg>
<svg class="r" style="left:73px;top:600px;" width="16" height="16" viewBox="0 0 16 16"><rect x="0" y="9" width="7" height="7" fill="#c83838"/><rect x="9" y="10" width="7" height="6" fill="#f0d860"/><path d="M0 3 H6 M3 0 V6" stroke="#2e9a2e" stroke-width="1.8"/><path d="M7 3 H15 M12 1 L15 3 L12 5" stroke="#f04020" stroke-width="1.3" fill="none"/></svg>
<div class="t" style="left:94px;top:599.5px;line-height:16px;font-size:12px;transform:scaleX(0.9375);transform-origin:0 50%;color:#1e1e1e;">Mappings</div>
<svg class="r" style="left:91px;top:618px;" width="16" height="16" viewBox="0 0 16 16"><rect x="0" y="9" width="7" height="7" fill="#c83838"/><rect x="9" y="9" width="7" height="7" fill="#f0d860"/><path d="M3 7 V4 H13 V7 M1 4 L3 2 M11 2 L13 4" stroke="#f08010" stroke-width="1.3" fill="none"/></svg>
<div class="t" style="left:112px;top:617.5px;line-height:16px;font-size:12px;transform:scaleX(0.9375);transform-origin:0 50%;color:#1e1e1e;">NC-Task 1 SAF - Device 2 (EtherCAT) 1</div>
<div class="r" style="left:6px;top:990px;width:101px;height:21px;background:#ffffff;"></div>
<div class="t" style="left:12px;top:992.5px;line-height:16px;font-size:12px;transform:scaleX(0.9833333333333334);transform-origin:0 50%;color:#1e1e1e;">Solution Explorer</div>
<div class="r" style="left:107px;top:990px;width:87px;height:21px;background:#4d6082;"></div>
<div class="t" style="left:115px;top:993.0px;line-height:16px;font-size:12px;transform:scaleX(0.9833333333333334);transform-origin:0 50%;color:#ffffff;">Team Explorer</div>
<div class="r" style="left:412px;top:109px;width:144px;height:19px;background:#fff29d;"></div>
<div class="t" style="left:416px;top:111.5px;line-height:16px;font-size:12px;transform:scaleX(0.9500000000000001);transform-origin:0 50%;color:#1e1e1e;">TwinCAT Project20</div>
<svg class="r" style="left:523px;top:115px;" width="9" height="9" viewBox="0 0 9 9"><path d="M0.5 4.5 H3 M3 1.5 V7.5 M3 2 H7.5 V7 H3" stroke="#1e1e1e" stroke-width="1.1" fill="none"/></svg>
<svg class="r" style="left:541px;top:115px;" width="10" height="9" viewBox="0 0 10 9"><path d="M0.5 0.5 L9.5 8.5 M9.5 0.5 L0.5 8.5" stroke="#1e1e1e" stroke-width="1.3"/></svg>
<svg class="r" style="left:1600px;top:118px;" width="8" height="5" viewBox="0 0 8 5"><path d="M0 0 L8 0 L4 4.5Z" fill="#d6dbe9"/></svg>
<div class="r" style="left:412px;top:128px;width:1199px;height:2px;background:#fff29d;"></div>
<div class="r" style="left:412px;top:130px;width:1199px;height:694px;background:#f0f0f0;"></div>
<div class="r" style="left:412px;top:130px;width:1px;height:694px;background:#9eaacb;"></div>
<div class="r" style="left:413px;top:130px;width:1px;height:694px;background:#a0a0a0;"></div>
<div class="r" style="left:414px;top:131px;width:1px;height:692px;background:#696969;"></div>
<div class="r" style="left:413px;top:130px;width:1196px;height:1px;background:#a0a0a0;"></div>
<div class="r" style="left:414px;top:131px;width:1195px;height:1px;background:#696969;"></div>
<div class="r" style="left:415px;top:132px;width:1194px;height:1px;background:#ffffff;"></div>
<div class="r" style="left:415px;top:132px;width:1px;height:410px;background:#ffffff;"></div>
<div class="r" style="left:1609px;top:130px;width:2px;height:694px;background:#fcfcfc;"></div>
<div class="r" style="left:423px;top:141px;width:49px;height:19px;background:#f0f0f0;border:1px solid #d9d9d9;box-sizing:border-box;"></div>
<div class="t" style="left:428.5px;top:141.5px;line-height:16px;font-size:12px;transform:scaleX(0.875);transform-origin:0 50%;color:#000000;">General</div>
<div class="r" style="left:471px;top:141px;width:59px;height:19px;background:#f0f0f0;border:1px solid #d9d9d9;box-sizing:border-box;"></div>
<div class="t" style="left:478.5px;top:141.5px;line-height:16px;font-size:12px;transform:scaleX(0.875);transform-origin:0 50%;color:#000000;">EtherCAT</div>
<div class="r" style="left:529px;top:141px;width:43px;height:19px;background:#f0f0f0;border:1px solid #d9d9d9;box-sizing:border-box;"></div>
<div class="t" style="left:536.4px;top:141.5px;line-height:16px;font-size:12px;transform:scaleX(0.875);transform-origin:0 50%;color:#000000;">DC</div>
<div class="r" style="left:571px;top:141px;width:77px;height:19px;background:#f0f0f0;border:1px solid #d9d9d9;box-sizing:border-box;"></div>
<div class="t" style="left:578.2px;top:141.5px;line-height:16px;font-size:12px;transform:scaleX(0.875);transform-origin:0 50%;color:#000000;">Process Data</div>
<div class="r" style="left:647px;top:141px;width:43px;height:19px;background:#f0f0f0;border:1px solid #d9d9d9;box-sizing:border-box;"></div>
<div class="t" style="left:654px;top:141.5px;line-height:16px;font-size:12px;transform:scaleX(0.875);transform-origin:0 50%;color:#000000;">Plc</div>
<div class="r" style="left:689px;top:141px;width:47px;height:19px;background:#f0f0f0;border:1px solid #d9d9d9;box-sizing:border-box;"></div>
<div class="t" style="left:696.3px;top:141.5px;line-height:16px;font-size:12px;transform:scaleX(0.875);transform-origin:0 50%;color:#000000;">Startup</div>
<div class="r" style="left:810px;top:141px;width:38px;height:19px;background:#f0f0f0;border:1px solid #d9d9d9;box-sizing:border-box;"></div>
<div class="t" style="left:813px;top:141.5px;line-height:16px;font-size:12px;transform:scaleX(0.875);transform-origin:0 50%;color:#000000;">Online</div>
<div class="r" style="left:421px;top:159px;width:1169px;height:383px;background:#ffffff;border:1px solid #d9d9d9;box-sizing:border-box;"></div>
<div class="r" style="left:733px;top:137px;width:79px;height:23px;background:#ffffff;border:1px solid #d9d9d9;border-bottom:none;box-sizing:border-box;"></div>
<div class="t" style="left:741px;top:141.0px;line-height:16px;font-size:12px;transform:scaleX(0.875);transform-origin:0 50%;color:#000000;">CoE - Online</div>
<div class="r" style="left:437px;top:173px;width:129px;height:18px;background:#e1e1e1;border:2px solid #0078d7;box-sizing:border-box;"></div>
<div class="t" style="left:437px;top:174.0px;line-height:16px;font-size:12px;transform:scaleX(0.875);transform-origin:50% 50%;color:#000000;width:129px;overflow:hidden;text-align:center;">Update List</div>
<div class="r" style="left:437px;top:199px;width:129px;height:18px;background:#e1e1e1;border:1px solid #adadad;box-sizing:border-box;"></div>
<div class="t" style="left:437px;top:200.0px;line-height:16px;font-size:12px;transform:scaleX(0.875);transform-origin:50% 50%;color:#000000;width:129px;overflow:hidden;text-align:center;">Advanced...</div>
<div class="r" style="left:437px;top:225px;width:129px;height:18px;background:#e1e1e1;border:1px solid #adadad;box-sizing:border-box;"></div>
<div class="t" style="left:437px;top:226.0px;line-height:16px;font-size:12px;transform:scaleX(0.875);transform-origin:50% 50%;color:#000000;width:129px;overflow:hidden;text-align:center;">Add to Startup...</div>
<div class="r" style="left:587px;top:177px;width:13px;height:13px;background:#ffffff;border:1px solid #333333;box-sizing:border-box;"></div>
<div class="t" style="left:603px;top:175.5px;line-height:16px;font-size:12px;transform:scaleX(0.875);transform-origin:0 50%;color:#000;">Auto Update</div>
<div class="r" style="left:677px;top:177px;width:13px;height:13px;background:#ffffff;border:1px solid #333333;box-sizing:border-box;"></div>
<svg class="r" style="left:679px;top:179px;" width="9" height="9" viewBox="0 0 9 9"><path d="M0.5 4.5 L3.5 7.5 L8.5 1" stroke="#333" stroke-width="1.3" fill="none"/></svg>
<div class="t" style="left:693px;top:175.5px;line-height:16px;font-size:12px;transform:scaleX(0.875);transform-origin:0 50%;color:#000;">Single Update</div>
<div class="r" style="left:766px;top:177px;width:13px;height:13px;background:#ffffff;border:1px solid #333333;box-sizing:border-box;"></div>
<div class="t" style="left:782px;top:175.5px;line-height:16px;font-size:12px;transform:scaleX(0.875);transform-origin:0 50%;color:#000;">Show Offline Data</div>
<div class="r" style="left:587px;top:198px;width:308px;height:20px;background:#ffffff;border:1px solid #7a7a7a;box-sizing:border-box;"></div>
<div class="r" style="left:587px;top:224px;width:89px;height:20px;background:#ffffff;border:1px solid #7a7a7a;box-sizing:border-box;"></div>
<div class="t" style="left:590px;top:226.0px;line-height:16px;font-size:12px;transform:scaleX(0.875);transform-origin:0 50%;color:#00868c;">Online Data</div>
<div class="t" style="left:712px;top:223.0px;line-height:16px;font-size:12px;transform:scaleX(0.875);transform-origin:0 50%;color:#000;">Module OD (AoE Port):</div>
<div class="r" style="left:839px;top:223px;width:56px;height:20px;background:#ffffff;border:1px solid #7a7a7a;box-sizing:border-box;"></div>
<div class="t" style="left:842px;top:224.5px;line-height:16px;font-size:12px;transform:scaleX(0.875);transform-origin:0 50%;color:#000;">0</div>
<div class="r" style="left:436px;top:254px;width:1142px;height:280px;background:#ffffff;border:1px solid #828790;box-sizing:border-box;"></div>
<div class="r" style="left:522px;top:256px;width:1px;height:23px;background:#e5e5e5;"></div>
<div class="r" style="left:722px;top:256px;width:1px;height:23px;background:#e5e5e5;"></div>
<div class="r" style="left:792px;top:256px;width:1px;height:23px;background:#e5e5e5;"></div>
<div class="r" style="left:972px;top:256px;width:1px;height:23px;background:#e5e5e5;"></div>
<div class="r" style="left:1042px;top:256px;width:1px;height:23px;background:#e5e5e5;"></div>
<div class="t" style="left:444px;top:260.0px;line-height:16px;font-size:12px;transform:scaleX(0.875);transform-origin:0 50%;color:#000;">Index</div>
<div class="t" style="left:529px;top:260.0px;line-height:16px;font-size:12px;transform:scaleX(0.875);transform-origin:0 50%;color:#000;">Name</div>
<div class="t" style="left:729px;top:260.0px;line-height:16px;font-size:12px;transform:scaleX(0.875);transform-origin:0 50%;color:#000;">Flags</div>
<div class="t" style="left:799px;top:260.0px;line-height:16px;font-size:12px;transform:scaleX(0.875);transform-origin:0 50%;color:#000;">Value</div>
<div class="t" style="left:979px;top:260.0px;line-height:16px;font-size:12px;transform:scaleX(0.875);transform-origin:0 50%;color:#000;">Unit</div>
<div class="r" style="left:458px;top:280px;width:585px;height:17px;background:#e0ffff;"></div>
<div class="t" style="left:460px;top:280.5px;line-height:16px;font-size:12px;transform:scaleX(0.875);transform-origin:0 50%;color:#000;">2760</div>
<div class="t" style="left:529px;top:280.5px;line-height:16px;font-size:12px;transform:scaleX(0.875);transform-origin:0 50%;color:#000;">Power stage temp. sensor 3 type</div>
<div class="t" style="left:729px;top:280.5px;line-height:16px;font-size:12px;transform:scaleX(0.875);transform-origin:0 50%;color:#000;">RO</div>
<div class="t" style="left:799px;top:280.5px;line-height:16px;font-size:12px;transform:scaleX(0.875);transform-origin:0 50%;color:#000;">0x0000 (0)</div>
<svg class="r" style="left:447px;top:288px;" width="10" height="1" viewBox="0 0 10 1"><path d="M0 0.5 H9" stroke="#a0a0a0" stroke-width="1" stroke-dasharray="1 1"/></svg>
<div class="t" style="left:460px;top:297.5px;line-height:16px;font-size:12px;transform:scaleX(0.875);transform-origin:0 50%;color:#000;">2761</div>
<div class="t" style="left:529px;top:297.5px;line-height:16px;font-size:12px;transform:scaleX(0.875);transform-origin:0 50%;color:#000;">Power stage temp. sensor 3 resistance</div>
<div class="t" style="left:729px;top:297.5px;line-height:16px;font-size:12px;transform:scaleX(0.875);transform-origin:0 50%;color:#000;">RO</div>
<div class="t" style="left:799px;top:297.5px;line-height:16px;font-size:12px;transform:scaleX(0.875);transform-origin:0 50%;color:#000;">0x00002710 (10000)</div>
<svg class="r" style="left:447px;top:305px;" width="10" height="1" viewBox="0 0 10 1"><path d="M0 0.5 H9" stroke="#a0a0a0" stroke-width="1" stroke-dasharray="1 1"/></svg>
<div class="r" style="left:458px;top:314px;width:585px;height:17px;background:#e0ffff;"></div>
<div class="t" style="left:460px;top:314.5px;line-height:16px;font-size:12px;transform:scaleX(0.875);transform-origin:0 50%;color:#000;">2762</div>
<div class="t" style="left:529px;top:314.5px;line-height:16px;font-size:12px;transform:scaleX(0.875);transform-origin:0 50%;color:#000;">Power stage temp. sensor 3 β</div>
<div class="t" style="left:729px;top:314.5px;line-height:16px;font-size:12px;transform:scaleX(0.875);transform-origin:0 50%;color:#000;">RO</div>
<div class="t" style="left:799px;top:314.5px;line-height:16px;font-size:12px;transform:scaleX(0.875);transform-origin:0 50%;color:#000;">0x0D6B (3435)</div>
<svg class="r" style="left:447px;top:322px;" width="10" height="1" viewBox="0 0 10 1"><path d="M0 0.5 H9" stroke="#a0a0a0" stroke-width="1" stroke-dasharray="1 1"/></svg>
<div class="t" style="left:460px;top:331.5px;line-height:16px;font-size:12px;transform:scaleX(0.875);transform-origin:0 50%;color:#000;">2763</div>
<div class="t" style="left:529px;top:331.5px;line-height:16px;font-size:12px;transform:scaleX(0.875);transform-origin:0 50%;color:#000;">Power stage temp. sensor 3 ext. resist...</div>
<div class="t" style="left:729px;top:331.5px;line-height:16px;font-size:12px;transform:scaleX(0.875);transform-origin:0 50%;color:#000;">RO</div>
<div class="t" style="left:799px;top:331.5px;line-height:16px;font-size:12px;transform:scaleX(0.875);transform-origin:0 50%;color:#000;">0x00000BB8 (3000)</div>
<svg class="r" style="left:447px;top:339px;" width="10" height="1" viewBox="0 0 10 1"><path d="M0 0.5 H9" stroke="#a0a0a0" stroke-width="1" stroke-dasharray="1 1"/></svg>
<div class="r" style="left:458px;top:348px;width:585px;height:17px;background:#e0ffff;"></div>
<div class="t" style="left:460px;top:348.5px;line-height:16px;font-size:12px;transform:scaleX(0.875);transform-origin:0 50%;color:#000;">2764</div>
<div class="t" style="left:529px;top:348.5px;line-height:16px;font-size:12px;transform:scaleX(0.875);transform-origin:0 50%;color:#000;">Power stage temp. sensor 3 gain</div>
<div class="t" style="left:729px;top:348.5px;line-height:16px;font-size:12px;transform:scaleX(0.875);transform-origin:0 50%;color:#000;">RO</div>
<div class="t" style="left:799px;top:348.5px;line-height:16px;font-size:12px;transform:scaleX(0.875);transform-origin:0 50%;color:#000;">1.000000  (1.000000e+00)</div>
<svg class="r" style="left:447px;top:356px;" width="10" height="1" viewBox="0 0 10 1"><path d="M0 0.5 H9" stroke="#a0a0a0" stroke-width="1" stroke-dasharray="1 1"/></svg>
<div class="t" style="left:460px;top:365.5px;line-height:16px;font-size:12px;transform:scaleX(0.875);transform-origin:0 50%;color:#000;">2765</div>
<div class="t" style="left:529px;top:365.5px;line-height:16px;font-size:12px;transform:scaleX(0.875);transform-origin:0 50%;color:#000;">Power stage temp. sensor 3 offset</div>
<div class="t" style="left:729px;top:365.5px;line-height:16px;font-size:12px;transform:scaleX(0.875);transform-origin:0 50%;color:#000;">RO</div>
<div class="t" style="left:799px;top:365.5px;line-height:16px;font-size:12px;transform:scaleX(0.875);transform-origin:0 50%;color:#000;">0.000000  (0.000000e+00)</div>
<svg class="r" style="left:447px;top:373px;" width="10" height="1" viewBox="0 0 10 1"><path d="M0 0.5 H9" stroke="#a0a0a0" stroke-width="1" stroke-dasharray="1 1"/></svg>
<div class="r" style="left:458px;top:382px;width:585px;height:17px;background:#e0ffff;"></div>
<div class="t" style="left:460px;top:382.5px;line-height:16px;font-size:12px;transform:scaleX(0.875);transform-origin:0 50%;color:#000;">5EDE</div>
<div class="t" style="left:529px;top:382.5px;line-height:16px;font-size:12px;transform:scaleX(0.875);transform-origin:0 50%;color:#000;">Force Coco Boot Code</div>
<div class="t" style="left:729px;top:382.5px;line-height:16px;font-size:12px;transform:scaleX(0.875);transform-origin:0 50%;color:#000;">WO</div>
<svg class="r" style="left:447px;top:390px;" width="10" height="1" viewBox="0 0 10 1"><path d="M0 0.5 H9" stroke="#a0a0a0" stroke-width="1" stroke-dasharray="1 1"/></svg>
<div class="t" style="left:460px;top:399.5px;line-height:16px;font-size:12px;transform:scaleX(0.875);transform-origin:0 50%;color:#000;">6007</div>
<div class="t" style="left:529px;top:399.5px;line-height:16px;font-size:12px;transform:scaleX(0.875);transform-origin:0 50%;color:#000;">Abort connection option code</div>
<div class="t" style="left:729px;top:399.5px;line-height:16px;font-size:12px;transform:scaleX(0.875);transform-origin:0 50%;color:#000;">RW</div>
<div class="t" style="left:799px;top:399.5px;line-height:16px;font-size:12px;transform:scaleX(0.875);transform-origin:0 50%;color:#000;">0</div>
<svg class="r" style="left:447px;top:407px;" width="10" height="1" viewBox="0 0 10 1"><path d="M0 0.5 H9" stroke="#a0a0a0" stroke-width="1" stroke-dasharray="1 1"/></svg>
<div class="r" style="left:458px;top:416px;width:585px;height:17px;background:#e0ffff;"></div>
<div class="t" style="left:460px;top:416.5px;line-height:16px;font-size:12px;transform:scaleX(0.875);transform-origin:0 50%;color:#000;">6040</div>
<div class="t" style="left:529px;top:416.5px;line-height:16px;font-size:12px;transform:scaleX(0.875);transform-origin:0 50%;color:#000;">Control Word</div>
<div class="t" style="left:729px;top:416.5px;line-height:16px;font-size:12px;transform:scaleX(0.875);transform-origin:0 50%;color:#000;">RW P</div>
<div class="t" style="left:799px;top:416.5px;line-height:16px;font-size:12px;transform:scaleX(0.875);transform-origin:0 50%;color:#000;">0x0000 (0)</div>
<svg class="r" style="left:447px;top:424px;" width="10" height="1" viewBox="0 0 10 1"><path d="M0 0.5 H9" stroke="#a0a0a0" stroke-width="1" stroke-dasharray="1 1"/></svg>
<div class="t" style="left:460px;top:433.5px;line-height:16px;font-size:12px;transform:scaleX(0.875);transform-origin:0 50%;color:#000;">6041</div>
<div class="t" style="left:529px;top:433.5px;line-height:16px;font-size:12px;transform:scaleX(0.875);transform-origin:0 50%;color:#000;">Status Word</div>
<div class="t" style="left:729px;top:433.5px;line-height:16px;font-size:12px;transform:scaleX(0.875);transform-origin:0 50%;color:#000;">RO P</div>
<div class="t" style="left:799px;top:433.5px;line-height:16px;font-size:12px;transform:scaleX(0.875);transform-origin:0 50%;color:#000;">0x0250 (592)</div>
<svg class="r" style="left:447px;top:441px;" width="10" height="1" viewBox="0 0 10 1"><path d="M0 0.5 H9" stroke="#a0a0a0" stroke-width="1" stroke-dasharray="1 1"/></svg>
<div class="r" style="left:458px;top:450px;width:585px;height:17px;background:#e0ffff;"></div>
<div class="t" style="left:460px;top:450.5px;line-height:16px;font-size:12px;transform:scaleX(0.875);transform-origin:0 50%;color:#000;">605A</div>
<div class="t" style="left:529px;top:450.5px;line-height:16px;font-size:12px;transform:scaleX(0.875);transform-origin:0 50%;color:#000;">Quick stop option code</div>
<div class="t" style="left:729px;top:450.5px;line-height:16px;font-size:12px;transform:scaleX(0.875);transform-origin:0 50%;color:#000;">RW</div>
<div class="t" style="left:799px;top:450.5px;line-height:16px;font-size:12px;transform:scaleX(0.875);transform-origin:0 50%;color:#000;">5</div>
<svg class="r" style="left:447px;top:458px;" width="10" height="1" viewBox="0 0 10 1"><path d="M0 0.5 H9" stroke="#a0a0a0" stroke-width="1" stroke-dasharray="1 1"/></svg>
<div class="t" style="left:460px;top:467.5px;line-height:16px;font-size:12px;transform:scaleX(0.875);transform-origin:0 50%;color:#000;">6060</div>
<div class="t" style="left:529px;top:467.5px;line-height:16px;font-size:12px;transform:scaleX(0.875);transform-origin:0 50%;color:#000;">Operation mode</div>
<div class="t" style="left:729px;top:467.5px;line-height:16px;font-size:12px;transform:scaleX(0.875);transform-origin:0 50%;color:#000;">RW P</div>
<div class="t" style="left:799px;top:467.5px;line-height:16px;font-size:12px;transform:scaleX(0.875);transform-origin:0 50%;color:#000;">-1</div>
<svg class="r" style="left:447px;top:475px;" width="10" height="1" viewBox="0 0 10 1"><path d="M0 0.5 H9" stroke="#a0a0a0" stroke-width="1" stroke-dasharray="1 1"/></svg>
<div class="r" style="left:458px;top:484px;width:585px;height:17px;background:#e0ffff;"></div>
<div class="t" style="left:460px;top:484.5px;line-height:16px;font-size:12px;transform:scaleX(0.875);transform-origin:0 50%;color:#000;">6061</div>
<div class="t" style="left:529px;top:484.5px;line-height:16px;font-size:12px;transform:scaleX(0.875);transform-origin:0 50%;color:#000;">Operation mode display</div>
<div class="t" style="left:729px;top:484.5px;line-height:16px;font-size:12px;transform:scaleX(0.875);transform-origin:0 50%;color:#000;">RO P</div>
<div class="t" style="left:799px;top:484.5px;line-height:16px;font-size:12px;transform:scaleX(0.875);transform-origin:0 50%;color:#000;">-1</div>
<svg class="r" style="left:447px;top:492px;" width="10" height="1" viewBox="0 0 10 1"><path d="M0 0.5 H9" stroke="#a0a0a0" stroke-width="1" stroke-dasharray="1 1"/></svg>
<div class="t" style="left:460px;top:501.5px;line-height:16px;font-size:12px;transform:scaleX(0.875);transform-origin:0 50%;color:#000;">6064</div>
<div class="t" style="left:529px;top:501.5px;line-height:16px;font-size:12px;transform:scaleX(0.875);transform-origin:0 50%;color:#000;">Actual position</div>
<div class="t" style="left:729px;top:501.5px;line-height:16px;font-size:12px;transform:scaleX(0.875);transform-origin:0 50%;color:#000;">RO P</div>
<div class="t" style="left:799px;top:501.5px;line-height:16px;font-size:12px;transform:scaleX(0.875);transform-origin:0 50%;color:#000;">0</div>
<svg class="r" style="left:447px;top:509px;" width="10" height="1" viewBox="0 0 10 1"><path d="M0 0.5 H9" stroke="#a0a0a0" stroke-width="1" stroke-dasharray="1 1"/></svg>
<div class="r" style="left:458px;top:518px;width:585px;height:15px;background:#e0ffff;"></div>
<div class="t" style="left:460px;top:518.5px;line-height:16px;font-size:12px;transform:scaleX(0.875);transform-origin:0 50%;color:#000;">6065</div>
<div class="t" style="left:529px;top:518.5px;line-height:16px;font-size:12px;transform:scaleX(0.875);transform-origin:0 50%;color:#000;">Position following error window</div>
<div class="t" style="left:729px;top:518.5px;line-height:16px;font-size:12px;transform:scaleX(0.875);transform-origin:0 50%;color:#000;">RW P</div>
<div class="t" style="left:799px;top:518.5px;line-height:16px;font-size:12px;transform:scaleX(0.875);transform-origin:0 50%;color:#000;">0x00000064 (100)</div>
<svg class="r" style="left:447px;top:526px;" width="10" height="1" viewBox="0 0 10 1"><path d="M0 0.5 H9" stroke="#a0a0a0" stroke-width="1" stroke-dasharray="1 1"/></svg>
<svg class="r" style="left:446px;top:280px;" width="1" height="253" viewBox="0 0 1 253"><path d="M0.5 0 V253" stroke="#a0a0a0" stroke-width="1" stroke-dasharray="1 1"/></svg>
<div class="r" style="left:1560px;top:255px;width:17px;height:278px;background:#f0f0f0;"></div>
<svg class="r" style="left:1563px;top:261px;" width="9" height="6" viewBox="0 0 9 6"><path d="M0.8 5 L4.5 1.2 L8.2 5" stroke="#606060" stroke-width="1.6" fill="none"/></svg>
<svg class="r" style="left:1563px;top:521px;" width="9" height="6" viewBox="0 0 9 6"><path d="M0.8 1 L4.5 4.8 L8.2 1" stroke="#606060" stroke-width="1.6" fill="none"/></svg>
<div class="r" style="left:1561px;top:487px;width:15px;height:17px;background:#cdcdcd;"></div>
<div class="r" style="left:415px;top:542px;width:1194px;height:5px;background:#f0f0f0;"></div>
<div class="r" style="left:415px;top:542px;width:1194px;height:1px;background:#ffffff;"></div>
<div class="r" style="left:414px;top:547px;width:1195px;height:1px;background:#a0a0a0;"></div>
<div class="r" style="left:414px;top:548px;width:1195px;height:1px;background:#696969;"></div>
<div class="r" style="left:415px;top:549px;width:1194px;height:274px;background:#ffffff;"></div>
<div class="r" style="left:534px;top:550px;width:1px;height:23px;background:#e5e5e5;"></div>
<div class="r" style="left:554px;top:550px;width:1px;height:23px;background:#e5e5e5;"></div>
<div class="r" style="left:674px;top:550px;width:1px;height:23px;background:#e5e5e5;"></div>
<div class="r" style="left:754px;top:550px;width:1px;height:23px;background:#e5e5e5;"></div>
<div class="r" style="left:804px;top:550px;width:1px;height:23px;background:#e5e5e5;"></div>
<div class="r" style="left:862px;top:550px;width:1px;height:23px;background:#e5e5e5;"></div>
<div class="r" style="left:912px;top:550px;width:1px;height:23px;background:#e5e5e5;"></div>
<div class="r" style="left:962px;top:550px;width:1px;height:23px;background:#e5e5e5;"></div>
<div class="t" style="left:421px;top:553.0px;line-height:16px;font-size:12px;transform:scaleX(0.9416666666666668);transform-origin:0 50%;color:#000;">Name</div>
<div class="t" style="left:561px;top:553.0px;line-height:16px;font-size:12px;transform:scaleX(0.9416666666666668);transform-origin:0 50%;color:#000;">Online</div>
<div class="t" style="left:681px;top:553.0px;line-height:16px;font-size:12px;transform:scaleX(0.9416666666666668);transform-origin:0 50%;color:#000;">Type</div>
<div class="t" style="left:761px;top:553.0px;line-height:16px;font-size:12px;transform:scaleX(0.9416666666666668);transform-origin:0 50%;color:#000;">Size</div>
<div class="t" style="left:810px;top:553.0px;line-height:16px;font-size:12px;transform:scaleX(0.9416666666666668);transform-origin:0 50%;color:#000;">&gt;Addr...</div>
<div class="t" style="left:869px;top:553.0px;line-height:16px;font-size:12px;transform:scaleX(0.9416666666666668);transform-origin:0 50%;color:#000;">In/Out</div>
<div class="t" style="left:919px;top:553.0px;line-height:16px;font-size:12px;transform:scaleX(0.9416666666666668);transform-origin:0 50%;color:#000;">User ID</div>
<div class="t" style="left:969px;top:553.0px;line-height:16px;font-size:12px;transform:scaleX(0.9416666666666668);transform-origin:0 50%;color:#000;">Linked to</div>
<svg class="r" style="left:418px;top:575px;" width="15" height="15" viewBox="0 0 15 15"><rect x="5" y="2" width="9" height="9" fill="#f0d020" stroke="#b09000" stroke-width="0.8"/><path d="M1 6 H9" stroke="#f04010" stroke-width="2.2"/><path d="M7 3 L11 6 L7 9Z" fill="#f04010"/><rect x="0.5" y="8.5" width="6" height="6" fill="#fff" stroke="#666" stroke-width="1"/><path d="M2 13 L5 10 M3 10 H5 V12" stroke="#666" stroke-width="0.8" fill="none"/></svg>
<div class="t" style="left:437px;top:575.0px;line-height:16px;font-size:12px;transform:scaleX(0.9666666666666667);transform-origin:0 50%;color:#000;">Status Word</div>
<div class="t" style="left:541px;top:575.0px;line-height:16px;font-size:12px;transform:scaleX(0.9416666666666668);transform-origin:0 50%;color:#000;">X</div>
<div class="t" style="left:561px;top:575.0px;line-height:16px;font-size:12px;transform:scaleX(0.9416666666666668);transform-origin:0 50%;color:#000;">0</div>
<div class="t" style="left:681px;top:575.0px;line-height:16px;font-size:12px;transform:scaleX(0.9416666666666668);transform-origin:0 50%;color:#000;">UINT</div>
<div class="t" style="left:761px;top:575.0px;line-height:16px;font-size:12px;transform:scaleX(0.9166666666666666);transform-origin:0 50%;color:#000;">2.0</div>
<div class="t" style="left:811px;top:575.0px;line-height:16px;font-size:12px;transform:scaleX(0.9166666666666666);transform-origin:0 50%;color:#000;">39.0</div>
<div class="t" style="left:869px;top:575.0px;line-height:16px;font-size:12px;transform:scaleX(0.975);transform-origin:0 50%;color:#000;">Input</div>
<div class="t" style="left:919px;top:575.0px;line-height:16px;font-size:12px;transform:scaleX(0.9416666666666668);transform-origin:0 50%;color:#000;">0</div>
<div class="t" style="left:969px;top:575.0px;line-height:16px;font-size:12px;transform:scaleX(0.9500000000000001);transform-origin:0 50%;color:#000;">nState1, nState2</div>
<svg class="r" style="left:418px;top:594px;" width="15" height="15" viewBox="0 0 15 15"><rect x="5" y="2" width="9" height="9" fill="#f0d020" stroke="#b09000" stroke-width="0.8"/><path d="M1 6 H9" stroke="#f04010" stroke-width="2.2"/><path d="M7 3 L11 6 L7 9Z" fill="#f04010"/><rect x="0.5" y="8.5" width="6" height="6" fill="#fff" stroke="#666" stroke-width="1"/><path d="M2 13 L5 10 M3 10 H5 V12" stroke="#666" stroke-width="0.8" fill="none"/></svg>
<div class="t" style="left:437px;top:594.0px;line-height:16px;font-size:12px;transform:scaleX(0.9666666666666667);transform-origin:0 50%;color:#000;">Actual position</div>
<div class="t" style="left:541px;top:594.0px;line-height:16px;font-size:12px;transform:scaleX(0.9416666666666668);transform-origin:0 50%;color:#000;">X</div>
<div class="t" style="left:561px;top:594.0px;line-height:16px;font-size:12px;transform:scaleX(0.9416666666666668);transform-origin:0 50%;color:#000;">0</div>
<div class="t" style="left:681px;top:594.0px;line-height:16px;font-size:12px;transform:scaleX(0.9416666666666668);transform-origin:0 50%;color:#000;">DINT</div>
<div class="t" style="left:761px;top:594.0px;line-height:16px;font-size:12px;transform:scaleX(0.9166666666666666);transform-origin:0 50%;color:#000;">4.0</div>
<div class="t" style="left:811px;top:594.0px;line-height:16px;font-size:12px;transform:scaleX(0.9166666666666666);transform-origin:0 50%;color:#000;">41.0</div>
<div class="t" style="left:869px;top:594.0px;line-height:16px;font-size:12px;transform:scaleX(0.975);transform-origin:0 50%;color:#000;">Input</div>
<div class="t" style="left:919px;top:594.0px;line-height:16px;font-size:12px;transform:scaleX(0.9416666666666668);transform-origin:0 50%;color:#000;">0</div>
<div class="t" style="left:969px;top:594.0px;line-height:16px;font-size:12px;transform:scaleX(0.9500000000000001);transform-origin:0 50%;color:#000;">nDataIn1 . In . Inputs . Data</div>
<svg class="r" style="left:418px;top:613px;" width="15" height="15" viewBox="0 0 15 15"><rect x="5" y="2" width="9" height="9" fill="#f0d020" stroke="#b09000" stroke-width="0.8"/><path d="M1 6 H9" stroke="#f04010" stroke-width="2.2"/><path d="M7 3 L11 6 L7 9Z" fill="#f04010"/><rect x="0.5" y="8.5" width="6" height="6" fill="#fff" stroke="#666" stroke-width="1"/><path d="M2 13 L5 10 M3 10 H5 V12" stroke="#666" stroke-width="0.8" fill="none"/></svg>
<div class="t" style="left:437px;top:613.0px;line-height:16px;font-size:12px;transform:scaleX(0.9666666666666667);transform-origin:0 50%;color:#000;">Actual velocity</div>
<div class="t" style="left:541px;top:613.0px;line-height:16px;font-size:12px;transform:scaleX(0.9416666666666668);transform-origin:0 50%;color:#000;">X</div>
<div class="t" style="left:561px;top:613.0px;line-height:16px;font-size:12px;transform:scaleX(0.9416666666666668);transform-origin:0 50%;color:#000;">0</div>
<div class="t" style="left:681px;top:613.0px;line-height:16px;font-size:12px;transform:scaleX(0.9416666666666668);transform-origin:0 50%;color:#000;">DINT</div>
<div class="t" style="left:761px;top:613.0px;line-height:16px;font-size:12px;transform:scaleX(0.9166666666666666);transform-origin:0 50%;color:#000;">4.0</div>
<div class="t" style="left:811px;top:613.0px;line-height:16px;font-size:12px;transform:scaleX(0.9166666666666666);transform-origin:0 50%;color:#000;">45.0</div>
<div class="t" style="left:869px;top:613.0px;line-height:16px;font-size:12px;transform:scaleX(0.975);transform-origin:0 50%;color:#000;">Input</div>
<div class="t" style="left:919px;top:613.0px;line-height:16px;font-size:12px;transform:scaleX(0.9416666666666668);transform-origin:0 50%;color:#000;">0</div>
<div class="t" style="left:969px;top:613.0px;line-height:16px;font-size:12px;transform:scaleX(0.9500000000000001);transform-origin:0 50%;color:#000;">nDataIn7 . In . Inputs . Data</div>
<svg class="r" style="left:418px;top:632px;" width="15" height="15" viewBox="0 0 15 15"><rect x="5" y="2" width="9" height="9" fill="#f0d020" stroke="#b09000" stroke-width="0.8"/><path d="M1 6 H9" stroke="#f04010" stroke-width="2.2"/><path d="M7 3 L11 6 L7 9Z" fill="#f04010"/><rect x="0.5" y="8.5" width="6" height="6" fill="#fff" stroke="#666" stroke-width="1"/><path d="M2 13 L5 10 M3 10 H5 V12" stroke="#666" stroke-width="0.8" fill="none"/></svg>
<div class="t" style="left:437px;top:632.0px;line-height:16px;font-size:12px;transform:scaleX(0.9666666666666667);transform-origin:0 50%;color:#000;">Operation mode...</div>
<div class="t" style="left:541px;top:632.0px;line-height:16px;font-size:12px;transform:scaleX(0.9416666666666668);transform-origin:0 50%;color:#000;">X</div>
<div class="t" style="left:561px;top:632.0px;line-height:16px;font-size:12px;transform:scaleX(0.9416666666666668);transform-origin:0 50%;color:#000;">0</div>
<div class="t" style="left:681px;top:632.0px;line-height:16px;font-size:12px;transform:scaleX(0.9416666666666668);transform-origin:0 50%;color:#000;">SINT</div>
<div class="t" style="left:761px;top:632.0px;line-height:16px;font-size:12px;transform:scaleX(0.9166666666666666);transform-origin:0 50%;color:#000;">1.0</div>
<div class="t" style="left:811px;top:632.0px;line-height:16px;font-size:12px;transform:scaleX(0.9166666666666666);transform-origin:0 50%;color:#000;">49.0</div>
<div class="t" style="left:869px;top:632.0px;line-height:16px;font-size:12px;transform:scaleX(0.975);transform-origin:0 50%;color:#000;">Input</div>
<div class="t" style="left:919px;top:632.0px;line-height:16px;font-size:12px;transform:scaleX(0.9416666666666668);transform-origin:0 50%;color:#000;">0</div>
<div class="t" style="left:969px;top:632.0px;line-height:16px;font-size:12px;transform:scaleX(0.9500000000000001);transform-origin:0 50%;color:#000;">nState5 . In . Inputs . Data</div>
<svg class="r" style="left:418px;top:651px;" width="15" height="15" viewBox="0 0 15 15"><rect x="5" y="2" width="9" height="9" fill="#f0d020" stroke="#b09000" stroke-width="0.8"/><path d="M1 6 H9" stroke="#f04010" stroke-width="2.2"/><path d="M7 3 L11 6 L7 9Z" fill="#f04010"/><rect x="0.5" y="8.5" width="6" height="6" fill="#fff" stroke="#666" stroke-width="1"/><path d="M2 13 L5 10 M3 10 H5 V12" stroke="#666" stroke-width="0.8" fill="none"/></svg>
<div class="t" style="left:437px;top:651.0px;line-height:16px;font-size:12px;transform:scaleX(0.9666666666666667);transform-origin:0 50%;color:#000;">WcState</div>
<div class="t" style="left:541px;top:651.0px;line-height:16px;font-size:12px;transform:scaleX(0.9416666666666668);transform-origin:0 50%;color:#000;">X</div>
<div class="t" style="left:561px;top:651.0px;line-height:16px;font-size:12px;transform:scaleX(0.9416666666666668);transform-origin:0 50%;color:#000;">1</div>
<div class="t" style="left:681px;top:651.0px;line-height:16px;font-size:12px;transform:scaleX(0.9416666666666668);transform-origin:0 50%;color:#000;">BIT</div>
<div class="t" style="left:761px;top:651.0px;line-height:16px;font-size:12px;transform:scaleX(0.9166666666666666);transform-origin:0 50%;color:#000;">0.1</div>
<div class="t" style="left:811px;top:651.0px;line-height:16px;font-size:12px;transform:scaleX(0.9166666666666666);transform-origin:0 50%;color:#000;">1522.1</div>
<div class="t" style="left:869px;top:651.0px;line-height:16px;font-size:12px;transform:scaleX(0.975);transform-origin:0 50%;color:#000;">Input</div>
<div class="t" style="left:919px;top:651.0px;line-height:16px;font-size:12px;transform:scaleX(0.9416666666666668);transform-origin:0 50%;color:#000;">0</div>
<div class="t" style="left:969px;top:651.0px;line-height:16px;font-size:12px;transform:scaleX(0.9500000000000001);transform-origin:0 50%;color:#000;">nState4, nState4</div>
<svg class="r" style="left:418px;top:670px;" width="15" height="15" viewBox="0 0 15 15"><rect x="5" y="2" width="9" height="9" fill="#f0d020" stroke="#b09000" stroke-width="0.8"/><path d="M1 6 H9" stroke="#f04010" stroke-width="2.2"/><path d="M7 3 L11 6 L7 9Z" fill="#f04010"/><rect x="0.5" y="8.5" width="6" height="6" fill="#fff" stroke="#666" stroke-width="1"/><path d="M2 13 L5 10 M3 10 H5 V12" stroke="#666" stroke-width="0.8" fill="none"/></svg>
<div class="t" style="left:437px;top:670.0px;line-height:16px;font-size:12px;transform:scaleX(0.9666666666666667);transform-origin:0 50%;color:#000;">InputToggle</div>
<div class="t" style="left:541px;top:670.0px;line-height:16px;font-size:12px;transform:scaleX(0.9416666666666668);transform-origin:0 50%;color:#000;">X</div>
<div class="t" style="left:561px;top:670.0px;line-height:16px;font-size:12px;transform:scaleX(0.9416666666666668);transform-origin:0 50%;color:#000;">0</div>
<div class="t" style="left:681px;top:670.0px;line-height:16px;font-size:12px;transform:scaleX(0.9416666666666668);transform-origin:0 50%;color:#000;">BIT</div>
<div class="t" style="left:761px;top:670.0px;line-height:16px;font-size:12px;transform:scaleX(0.9166666666666666);transform-origin:0 50%;color:#000;">0.1</div>
<div class="t" style="left:811px;top:670.0px;line-height:16px;font-size:12px;transform:scaleX(0.9166666666666666);transform-origin:0 50%;color:#000;">1524.1</div>
<div class="t" style="left:869px;top:670.0px;line-height:16px;font-size:12px;transform:scaleX(0.975);transform-origin:0 50%;color:#000;">Input</div>
<div class="t" style="left:919px;top:670.0px;line-height:16px;font-size:12px;transform:scaleX(0.9416666666666668);transform-origin:0 50%;color:#000;">0</div>
<div class="t" style="left:969px;top:670.0px;line-height:16px;font-size:12px;transform:scaleX(0.9500000000000001);transform-origin:0 50%;color:#000;">nState4, nState4</div>
<svg class="r" style="left:418px;top:689px;" width="15" height="15" viewBox="0 0 15 15"><rect x="5" y="2" width="9" height="9" fill="#f0d020" stroke="#b09000" stroke-width="0.8"/><path d="M1 6 H9" stroke="#f04010" stroke-width="2.2"/><path d="M7 3 L11 6 L7 9Z" fill="#f04010"/></svg>
<div class="t" style="left:437px;top:689.0px;line-height:16px;font-size:12px;transform:scaleX(0.9666666666666667);transform-origin:0 50%;color:#000;">State</div>
<div class="t" style="left:561px;top:689.0px;line-height:16px;font-size:12px;transform:scaleX(0.9416666666666668);transform-origin:0 50%;color:#000;">2</div>
<div class="t" style="left:681px;top:689.0px;line-height:16px;font-size:12px;transform:scaleX(0.9416666666666668);transform-origin:0 50%;color:#000;">UINT</div>
<div class="t" style="left:761px;top:689.0px;line-height:16px;font-size:12px;transform:scaleX(0.9166666666666666);transform-origin:0 50%;color:#000;">2.0</div>
<div class="t" style="left:811px;top:689.0px;line-height:16px;font-size:12px;transform:scaleX(0.9166666666666666);transform-origin:0 50%;color:#000;">1548.0</div>
<div class="t" style="left:869px;top:689.0px;line-height:16px;font-size:12px;transform:scaleX(0.975);transform-origin:0 50%;color:#000;">Input</div>
<div class="t" style="left:919px;top:689.0px;line-height:16px;font-size:12px;transform:scaleX(0.9416666666666668);transform-origin:0 50%;color:#000;">0</div>
<svg class="r" style="left:418px;top:708px;" width="15" height="15" viewBox="0 0 15 15"><rect x="5" y="2" width="9" height="9" fill="#f0d020" stroke="#b09000" stroke-width="0.8"/><path d="M1 6 H9" stroke="#f04010" stroke-width="2.2"/><path d="M7 3 L11 6 L7 9Z" fill="#f04010"/></svg>
<div class="t" style="left:437px;top:708.0px;line-height:16px;font-size:12px;transform:scaleX(0.9666666666666667);transform-origin:0 50%;color:#000;">AdsAddr</div>
<div class="t" style="left:561px;top:708.0px;line-height:16px;font-size:10.9px;color:#000;">192.168.1.207.3.1:1...</div>
<div class="t" style="left:681px;top:708.0px;line-height:16px;font-size:12px;transform:scaleX(0.9416666666666668);transform-origin:0 50%;color:#000;">AMSADDR</div>
<div class="t" style="left:761px;top:708.0px;line-height:16px;font-size:12px;transform:scaleX(0.9166666666666666);transform-origin:0 50%;color:#000;">8.0</div>
<div class="t" style="left:811px;top:708.0px;line-height:16px;font-size:12px;transform:scaleX(0.9166666666666666);transform-origin:0 50%;color:#000;">1550.0</div>
<div class="t" style="left:869px;top:708.0px;line-height:16px;font-size:12px;transform:scaleX(0.975);transform-origin:0 50%;color:#000;">Input</div>
<div class="t" style="left:919px;top:708.0px;line-height:16px;font-size:12px;transform:scaleX(0.9416666666666668);transform-origin:0 50%;color:#000;">0</div>
<svg class="r" style="left:418px;top:727px;" width="15" height="15" viewBox="0 0 15 15"><rect x="5" y="2" width="9" height="9" fill="#f0d020" stroke="#b09000" stroke-width="0.8"/><path d="M1 6 H9" stroke="#f04010" stroke-width="2.2"/><path d="M7 3 L11 6 L7 9Z" fill="#f04010"/></svg>
<div class="t" style="left:437px;top:727.0px;line-height:16px;font-size:12px;transform:scaleX(0.9666666666666667);transform-origin:0 50%;color:#000;">Chn0</div>
<div class="t" style="left:561px;top:727.0px;line-height:16px;font-size:12px;transform:scaleX(0.9416666666666668);transform-origin:0 50%;color:#000;">0</div>
<div class="t" style="left:681px;top:727.0px;line-height:16px;font-size:12px;transform:scaleX(0.9416666666666668);transform-origin:0 50%;color:#000;">USINT</div>
<div class="t" style="left:761px;top:727.0px;line-height:16px;font-size:12px;transform:scaleX(0.9166666666666666);transform-origin:0 50%;color:#000;">1.0</div>
<div class="t" style="left:811px;top:727.0px;line-height:16px;font-size:12px;transform:scaleX(0.9166666666666666);transform-origin:0 50%;color:#000;">1558.0</div>
<div class="t" style="left:869px;top:727.0px;line-height:16px;font-size:12px;transform:scaleX(0.975);transform-origin:0 50%;color:#000;">Input</div>
<div class="t" style="left:919px;top:727.0px;line-height:16px;font-size:12px;transform:scaleX(0.9416666666666668);transform-origin:0 50%;color:#000;">0</div>
<svg class="r" style="left:418px;top:746px;" width="15" height="15" viewBox="0 0 15 15"><rect x="2" y="2" width="9" height="9" fill="#c02828" stroke="#901010" stroke-width="0.8"/><path d="M6 6 H12" stroke="#f0a010" stroke-width="2"/><path d="M10 3 L14 6 L10 9Z" fill="#f0a010"/><rect x="0.5" y="8.5" width="6" height="6" fill="#fff" stroke="#666" stroke-width="1"/><path d="M2 13 L5 10 M3 10 H5 V12" stroke="#666" stroke-width="0.8" fill="none"/></svg>
<div class="t" style="left:437px;top:746.0px;line-height:16px;font-size:12px;transform:scaleX(0.9666666666666667);transform-origin:0 50%;color:#000;">Control Word</div>
<div class="t" style="left:541px;top:746.0px;line-height:16px;font-size:12px;transform:scaleX(0.9416666666666668);transform-origin:0 50%;color:#000;">X</div>
<div class="t" style="left:561px;top:746.0px;line-height:16px;font-size:12px;transform:scaleX(0.9416666666666668);transform-origin:0 50%;color:#000;">0</div>
<div class="t" style="left:681px;top:746.0px;line-height:16px;font-size:12px;transform:scaleX(0.9416666666666668);transform-origin:0 50%;color:#000;">UINT</div>
<div class="t" style="left:761px;top:746.0px;line-height:16px;font-size:12px;transform:scaleX(0.9166666666666666);transform-origin:0 50%;color:#000;">2.0</div>
<div class="t" style="left:811px;top:746.0px;line-height:16px;font-size:12px;transform:scaleX(0.9166666666666666);transform-origin:0 50%;color:#000;">39.0</div>
<div class="t" style="left:869px;top:746.0px;line-height:16px;font-size:12px;transform:scaleX(0.975);transform-origin:0 50%;color:#000;">Output</div>
<div class="t" style="left:919px;top:746.0px;line-height:16px;font-size:12px;transform:scaleX(0.9416666666666668);transform-origin:0 50%;color:#000;">0</div>
<div class="t" style="left:969px;top:746.0px;line-height:16px;font-size:12px;transform:scaleX(0.9500000000000001);transform-origin:0 50%;color:#000;">nCtrl1, nCtrl2</div>
<svg class="r" style="left:418px;top:765px;" width="15" height="15" viewBox="0 0 15 15"><rect x="2" y="2" width="9" height="9" fill="#c02828" stroke="#901010" stroke-width="0.8"/><path d="M6 6 H12" stroke="#f0a010" stroke-width="2"/><path d="M10 3 L14 6 L10 9Z" fill="#f0a010"/><rect x="0.5" y="8.5" width="6" height="6" fill="#fff" stroke="#666" stroke-width="1"/><path d="M2 13 L5 10 M3 10 H5 V12" stroke="#666" stroke-width="0.8" fill="none"/></svg>
<div class="t" style="left:437px;top:765.0px;line-height:16px;font-size:12px;transform:scaleX(0.9666666666666667);transform-origin:0 50%;color:#000;">Position set-point</div>
<div class="t" style="left:541px;top:765.0px;line-height:16px;font-size:12px;transform:scaleX(0.9416666666666668);transform-origin:0 50%;color:#000;">X</div>
<div class="t" style="left:561px;top:765.0px;line-height:16px;font-size:12px;transform:scaleX(0.9416666666666668);transform-origin:0 50%;color:#000;">0</div>
<div class="t" style="left:681px;top:765.0px;line-height:16px;font-size:12px;transform:scaleX(0.9416666666666668);transform-origin:0 50%;color:#000;">DINT</div>
<div class="t" style="left:761px;top:765.0px;line-height:16px;font-size:12px;transform:scaleX(0.9166666666666666);transform-origin:0 50%;color:#000;">4.0</div>
<div class="t" style="left:811px;top:765.0px;line-height:16px;font-size:12px;transform:scaleX(0.9166666666666666);transform-origin:0 50%;color:#000;">41.0</div>
<div class="t" style="left:869px;top:765.0px;line-height:16px;font-size:12px;transform:scaleX(0.975);transform-origin:0 50%;color:#000;">Output</div>
<div class="t" style="left:919px;top:765.0px;line-height:16px;font-size:12px;transform:scaleX(0.9416666666666668);transform-origin:0 50%;color:#000;">0</div>
<div class="t" style="left:969px;top:765.0px;line-height:16px;font-size:12px;transform:scaleX(0.9500000000000001);transform-origin:0 50%;color:#000;">nDataOut1 . Out . Outpu...</div>
<svg class="r" style="left:418px;top:784px;" width="15" height="15" viewBox="0 0 15 15"><rect x="2" y="2" width="9" height="9" fill="#c02828" stroke="#901010" stroke-width="0.8"/><path d="M6 6 H12" stroke="#f0a010" stroke-width="2"/><path d="M10 3 L14 6 L10 9Z" fill="#f0a010"/><rect x="0.5" y="8.5" width="6" height="6" fill="#fff" stroke="#666" stroke-width="1"/><path d="M2 13 L5 10 M3 10 H5 V12" stroke="#666" stroke-width="0.8" fill="none"/></svg>
<div class="t" style="left:437px;top:784.0px;line-height:16px;font-size:12px;transform:scaleX(0.9666666666666667);transform-origin:0 50%;color:#000;">Velocity set-point</div>
<div class="t" style="left:541px;top:784.0px;line-height:16px;font-size:12px;transform:scaleX(0.9416666666666668);transform-origin:0 50%;color:#000;">X</div>
<div class="t" style="left:561px;top:784.0px;line-height:16px;font-size:12px;transform:scaleX(0.9416666666666668);transform-origin:0 50%;color:#000;">0</div>
<div class="t" style="left:681px;top:784.0px;line-height:16px;font-size:12px;transform:scaleX(0.9416666666666668);transform-origin:0 50%;color:#000;">DINT</div>
<div class="t" style="left:761px;top:784.0px;line-height:16px;font-size:12px;transform:scaleX(0.9166666666666666);transform-origin:0 50%;color:#000;">4.0</div>
<div class="t" style="left:811px;top:784.0px;line-height:16px;font-size:12px;transform:scaleX(0.9166666666666666);transform-origin:0 50%;color:#000;">45.0</div>
<div class="t" style="left:869px;top:784.0px;line-height:16px;font-size:12px;transform:scaleX(0.975);transform-origin:0 50%;color:#000;">Output</div>
<div class="t" style="left:919px;top:784.0px;line-height:16px;font-size:12px;transform:scaleX(0.9416666666666668);transform-origin:0 50%;color:#000;">0</div>
<div class="t" style="left:969px;top:784.0px;line-height:16px;font-size:12px;transform:scaleX(0.9500000000000001);transform-origin:0 50%;color:#000;">nDataOut2 . Out . Outpu...</div>
<svg class="r" style="left:418px;top:803px;" width="15" height="15" viewBox="0 0 15 15"><rect x="2" y="2" width="9" height="9" fill="#c02828" stroke="#901010" stroke-width="0.8"/><path d="M6 6 H12" stroke="#f0a010" stroke-width="2"/><path d="M10 3 L14 6 L10 9Z" fill="#f0a010"/><rect x="0.5" y="8.5" width="6" height="6" fill="#fff" stroke="#666" stroke-width="1"/><path d="M2 13 L5 10 M3 10 H5 V12" stroke="#666" stroke-width="0.8" fill="none"/></svg>
<div class="t" style="left:437px;top:803.0px;line-height:16px;font-size:12px;transform:scaleX(0.9666666666666667);transform-origin:0 50%;color:#000;">Operation mode</div>
<div class="t" style="left:541px;top:803.0px;line-height:16px;font-size:12px;transform:scaleX(0.9416666666666668);transform-origin:0 50%;color:#000;">X</div>
<div class="t" style="left:561px;top:803.0px;line-height:16px;font-size:12px;transform:scaleX(0.9416666666666668);transform-origin:0 50%;color:#000;">0</div>
<div class="t" style="left:681px;top:803.0px;line-height:16px;font-size:12px;transform:scaleX(0.9416666666666668);transform-origin:0 50%;color:#000;">SINT</div>
<div class="t" style="left:761px;top:803.0px;line-height:16px;font-size:12px;transform:scaleX(0.9166666666666666);transform-origin:0 50%;color:#000;">1.0</div>
<div class="t" style="left:811px;top:803.0px;line-height:16px;font-size:12px;transform:scaleX(0.9166666666666666);transform-origin:0 50%;color:#000;">49.0</div>
<div class="t" style="left:869px;top:803.0px;line-height:16px;font-size:12px;transform:scaleX(0.975);transform-origin:0 50%;color:#000;">Output</div>
<div class="t" style="left:919px;top:803.0px;line-height:16px;font-size:12px;transform:scaleX(0.9416666666666668);transform-origin:0 50%;color:#000;">0</div>
<div class="t" style="left:969px;top:803.0px;line-height:16px;font-size:12px;transform:scaleX(0.9500000000000001);transform-origin:0 50%;color:#000;">nCtrl5 . Out . Outputs . ...</div>
<svg class="r" style="left:726px;top:130px;" width="91" height="38" viewBox="0 0 91 38"><ellipse cx="45" cy="18.4" rx="41.2" ry="14.9" fill="none" stroke="#f20a0a" stroke-width="4.5"/></svg>
<svg class="r" style="left:428px;top:372px;" width="92" height="37" viewBox="0 0 92 37"><ellipse cx="45.5" cy="18" rx="42.5" ry="14.5" fill="none" stroke="#f20a0a" stroke-width="4.5"/></svg>
<svg class="r" style="left:0px;top:0px;" width="1" height="1" viewBox="0 0 1 1"></svg>
<svg class="r" style="left:970px;top:377px" width="115" height="62" viewBox="970 377 115 62"><path d="M979.5 382 L1060.7 404 L1063.6 390.5 L1079 417.3 L1052.4 432.6 L1056.3 419.8 L975.3 398.5Z" fill="#ff0000" stroke="#333" stroke-width="1.6" stroke-linejoin="miter"/></svg>
<div class="r" style="left:1617px;top:109px;width:297px;height:72px;background:#8593b3;"></div>
<div class="r" style="left:1617px;top:181px;width:297px;height:810px;background:#ffffff;"></div>
<div class="r" style="left:1618px;top:109px;width:295px;height:22px;background:#4d6082;"></div>
<div class="t" style="left:1623px;top:112.5px;line-height:16px;font-size:12px;transform:scaleX(0.9833333333333334);transform-origin:0 50%;color:#ffffff;">Properties</div>
<svg class="r" style="left:1866px;top:117px;" width="8" height="5" viewBox="0 0 8 5"><path d="M0 0 L8 0 L4 4.5Z" fill="#ffffff"/></svg>
<svg class="r" style="left:1882px;top:114px;" width="8" height="12" viewBox="0 0 8 12"><path d="M2 0.75 H6 M2.5 0.75 V6.5 M5.5 0.75 V6.5 M0.5 6.5 H7.5 M4 6.5 V11.5" stroke="#ffffff" stroke-width="1.3" fill="none"/></svg>
<svg class="r" style="left:1898px;top:115px;" width="10" height="9" viewBox="0 0 10 9"><path d="M0.5 0.5 L9.5 8.5 M9.5 0.5 L0.5 8.5" stroke="#ffffff" stroke-width="1.3"/></svg>
<div class="r" style="left:1618px;top:131px;width:295px;height:25px;background:#fcfcfc;"></div>
<div class="t" style="left:1624px;top:134.5px;line-height:16px;font-size:12px;transform:scaleX(0.9500000000000001);transform-origin:0 50%;color:#000;font-weight:bold;">Drive 1 (Capitan NET)</div>
<div class="t" style="left:1748px;top:134.5px;line-height:16px;font-size:12px;transform:scaleX(0.9666666666666667);transform-origin:0 50%;color:#1e1e1e;">Capitan NET</div>
<svg class="r" style="left:1903px;top:141px;" width="6" height="4" viewBox="0 0 6 4"><path d="M0 0 L6 0 L3 3.5Z" fill="#1e1e1e"/></svg>
<div class="r" style="left:1619px;top:156px;width:293px;height:25px;background:#cfd6e5;"></div>
<div class="r" style="left:1621px;top:157px;width:23px;height:22px;background:#fcfcfc;border:1px solid #3a5a96;box-sizing:border-box;"></div>
<svg class="r" style="left:1625px;top:160px;" width="15" height="16" viewBox="0 0 15 16"><rect x="0" y="1" width="6" height="6" fill="#333"/><rect x="0" y="9" width="6" height="6" fill="#333"/><path d="M1.5 4 H4.5 M3 2.5 V5.5 M1.5 12 H4.5" stroke="#fff" stroke-width="1"/><path d="M8 1.5 H15 M8 4 H15 M8 6.5 H13 M8 9.5 H15 M8 12 H15 M8 14.5 H11" stroke="#333" stroke-width="1" stroke-dasharray="1.5 0.6"/></svg>
<svg class="r" style="left:1647px;top:159px;" width="16" height="17" viewBox="0 0 16 17"><text x="0" y="8" font-family="Liberation Sans" font-size="8" font-weight="bold" fill="#333">A</text><text x="0" y="16" font-family="Liberation Sans" font-size="8" font-weight="bold" fill="#333">Z</text><path d="M12 5 V14 M9.5 11 L12 14 L14.5 11" stroke="#1e5aa8" stroke-width="1.8" fill="none"/></svg>
<div class="r" style="left:1670px;top:159px;width:1px;height:19px;background:#9aa3b5;"></div>
<svg class="r" style="left:1676px;top:160px;" width="16" height="16" viewBox="0 0 16 16"><path d="M1.5 14.5 L8 8" stroke="#a0a6b4" stroke-width="3"/><circle cx="10" cy="6" r="4.3" fill="#a0a6b4"/><path d="M10.5 1 L15 5.5 L11 6 L10 5Z" fill="#cfd6e5"/></svg>
<div class="r" style="left:1619px;top:181px;width:293px;height:134px;background:#ffffff;"></div>
<div class="r" style="left:1619px;top:181px;width:293px;height:20px;background:#ebecf1;"></div>
<svg class="r" style="left:1621px;top:187px;" width="10" height="10" viewBox="0 0 10 10"><rect x="0.5" y="0.5" width="9" height="9" fill="#fff" stroke="#1e1e1e" stroke-width="1"/><path d="M2 5 H8" stroke="#1e1e1e" stroke-width="1.2"/></svg>
<div class="t" style="left:1637px;top:183.5px;line-height:16px;font-size:12px;transform:scaleX(0.9666666666666667);transform-origin:0 50%;color:#000;font-weight:bold;">Misc</div>
<div class="r" style="left:1619px;top:201px;width:14px;height:19px;background:#ebecf1;"></div>
<div class="r" style="left:1633px;top:219px;width:279px;height:1px;background:#f0f0f0;"></div>
<div class="r" style="left:1761px;top:201px;width:1px;height:19px;background:#f0f0f0;"></div>
<div class="t" style="left:1637px;top:202.5px;line-height:16px;font-size:12px;transform:scaleX(0.9666666666666667);transform-origin:0 50%;color:#1e1e1e;">(Name)</div>
<div class="t" style="left:1765px;top:202.5px;line-height:16px;font-size:12px;transform:scaleX(0.9666666666666667);transform-origin:0 50%;color:#000;font-weight:bold;width:147px;overflow:hidden;">Drive 1 (Capitan NET)</div>
<div class="r" style="left:1619px;top:220px;width:14px;height:19px;background:#ebecf1;"></div>
<div class="r" style="left:1633px;top:238px;width:279px;height:1px;background:#f0f0f0;"></div>
<div class="r" style="left:1761px;top:220px;width:1px;height:19px;background:#f0f0f0;"></div>
<div class="t" style="left:1637px;top:221.5px;line-height:16px;font-size:12px;transform:scaleX(0.9666666666666667);transform-origin:0 50%;color:#1e1e1e;">Disabled</div>
<div class="t" style="left:1765px;top:221.5px;line-height:16px;font-size:12px;transform:scaleX(0.9666666666666667);transform-origin:0 50%;color:#000;font-weight:bold;width:147px;overflow:hidden;">Enabled</div>
<div class="r" style="left:1619px;top:239px;width:14px;height:19px;background:#ebecf1;"></div>
<div class="r" style="left:1633px;top:257px;width:279px;height:1px;background:#f0f0f0;"></div>
<div class="r" style="left:1761px;top:239px;width:1px;height:19px;background:#f0f0f0;"></div>
<div class="t" style="left:1637px;top:240.5px;line-height:16px;font-size:12px;transform:scaleX(0.9666666666666667);transform-origin:0 50%;color:#6d6d6d;">ItemType</div>
<div class="t" style="left:1765px;top:240.5px;line-height:16px;font-size:12px;transform:scaleX(0.9666666666666667);transform-origin:0 50%;color:#6d6d6d;width:147px;overflow:hidden;">5</div>
<div class="r" style="left:1619px;top:258px;width:14px;height:19px;background:#ebecf1;"></div>
<div class="r" style="left:1633px;top:276px;width:279px;height:1px;background:#f0f0f0;"></div>
<div class="r" style="left:1761px;top:258px;width:1px;height:19px;background:#f0f0f0;"></div>
<div class="t" style="left:1637px;top:259.5px;line-height:16px;font-size:12px;transform:scaleX(0.9666666666666667);transform-origin:0 50%;color:#6d6d6d;">PathName</div>
<div class="t" style="left:1765px;top:259.5px;line-height:16px;font-size:12px;transform:scaleX(0.9666666666666667);transform-origin:0 50%;color:#6d6d6d;font-weight:bold;width:147px;overflow:hidden;">TIID^Device 2 (EtherCAT)^Drive 1</div>
<div class="r" style="left:1619px;top:277px;width:293px;height:20px;background:#ebecf1;"></div>
<svg class="r" style="left:1621px;top:283px;" width="10" height="10" viewBox="0 0 10 10"><rect x="0.5" y="0.5" width="9" height="9" fill="#fff" stroke="#1e1e1e" stroke-width="1"/><path d="M2 5 H8" stroke="#1e1e1e" stroke-width="1.2"/></svg>
<div class="t" style="left:1637px;top:279.5px;line-height:16px;font-size:12px;transform:scaleX(0.9666666666666667);transform-origin:0 50%;color:#000;font-weight:bold;">Persistent</div>
<div class="r" style="left:1619px;top:296px;width:14px;height:19px;background:#ebecf1;"></div>
<div class="r" style="left:1633px;top:314px;width:279px;height:1px;background:#f0f0f0;"></div>
<div class="r" style="left:1761px;top:296px;width:1px;height:19px;background:#f0f0f0;"></div>
<div class="t" style="left:1637px;top:297.5px;line-height:16px;font-size:12px;transform:scaleX(0.9666666666666667);transform-origin:0 50%;color:#1e1e1e;">Save in own File</div>
<div class="t" style="left:1765px;top:297.5px;line-height:16px;font-size:12px;transform:scaleX(0.9666666666666667);transform-origin:0 50%;color:#000;font-weight:bold;width:147px;overflow:hidden;">False</div>
<div class="r" style="left:1619px;top:315px;width:293px;height:675px;background:#ffffff;"></div>
<div class="r" style="left:1619px;top:927px;width:293px;height:1px;background:#e3e3e3;"></div>
<div class="t" style="left:1624px;top:933.5px;line-height:16px;font-size:12px;transform:scaleX(0.9666666666666667);transform-origin:0 50%;color:#000;font-weight:bold;">Misc</div>
<div class="r" style="left:1617px;top:990px;width:64px;height:21px;background:#ffffff;"></div>
<div class="t" style="left:1623px;top:992.0px;line-height:16px;font-size:12px;transform:scaleX(0.9833333333333334);transform-origin:0 50%;color:#1e1e1e;">Properties</div>
<div class="r" style="left:1681px;top:990px;width:55px;height:21px;background:#4d6082;"></div>
<div class="t" style="left:1688px;top:993.0px;line-height:16px;font-size:12px;transform:scaleX(0.9833333333333334);transform-origin:0 50%;color:#ffffff;">Toolbox</div>
<div class="r" style="left:412px;top:831px;width:1199px;height:48px;background:#8593b3;"></div>
<div class="r" style="left:412px;top:879px;width:1199px;height:112px;background:#ffffff;"></div>
<div class="r" style="left:413px;top:832px;width:1197px;height:22px;background:#4d6082;"></div>
<div class="t" style="left:418px;top:835.0px;line-height:16px;font-size:12px;transform:scaleX(0.9833333333333334);transform-origin:0 50%;color:#ffffff;">Error List</div>
<svg class="r" style="left:1563px;top:840px;" width="8" height="5" viewBox="0 0 8 5"><path d="M0 0 L8 0 L4 4.5Z" fill="#ffffff"/></svg>
<svg class="r" style="left:1579px;top:837px;" width="8" height="12" viewBox="0 0 8 12"><path d="M2 0.75 H6 M2.5 0.75 V6.5 M5.5 0.75 V6.5 M0.5 6.5 H7.5 M4 6.5 V11.5" stroke="#ffffff" stroke-width="1.3" fill="none"/></svg>
<svg class="r" style="left:1595px;top:838px;" width="10" height="9" viewBox="0 0 10 9"><path d="M0.5 0.5 L9.5 8.5 M9.5 0.5 L0.5 8.5" stroke="#ffffff" stroke-width="1.3"/></svg>
<div class="r" style="left:413px;top:853px;width:1197px;height:26px;background:#cfd6e5;"></div>
<div class="r" style="left:421px;top:856px;width:148px;height:20px;background:#ffffff;border:1px solid #cccedb;box-sizing:border-box;"></div>
<div class="t" style="left:424px;top:858.0px;line-height:16px;font-size:12px;transform:scaleX(0.9666666666666667);transform-origin:0 50%;color:#1e1e1e;">Entire Solution</div>
<svg class="r" style="left:559px;top:865px;" width="7" height="4" viewBox="0 0 7 4"><path d="M0 0 L7 0 L3.5 4Z" fill="#1e1e1e"/></svg>
<div class="r" style="left:577px;top:857px;width:1px;height:18px;background:#9aa3b5;"></div>
<div class="r" style="left:581px;top:855px;width:70px;height:22px;background:#fdfbf4;border:1px solid #3a5a96;box-sizing:border-box;"></div>
<svg class="r" style="left:584px;top:858px;" width="16" height="16" viewBox="0 0 16 16"><circle cx="8" cy="8" r="7.2" fill="#e51400"/><path d="M5 5 L11 11 M11 5 L5 11" stroke="#fff" stroke-width="2"/></svg>
<div class="t" style="left:604px;top:858.0px;line-height:16px;font-size:12px;transform:scaleX(0.9666666666666667);transform-origin:0 50%;color:#1e1e1e;">0 Errors</div>
<div class="r" style="left:655px;top:857px;width:1px;height:18px;background:#9aa3b5;"></div>
<div class="r" style="left:660px;top:855px;width:89px;height:22px;background:#fdfbf4;border:1px solid #3a5a96;box-sizing:border-box;"></div>
<svg class="r" style="left:663px;top:858px;" width="16" height="16" viewBox="0 0 16 16"><path d="M8 1 L15 15 H1Z" fill="#f8d000"/><rect x="7.1" y="5.5" width="1.8" height="5.5" fill="#1e1e1e"/><rect x="7.1" y="12" width="1.8" height="1.8" fill="#1e1e1e"/></svg>
<div class="t" style="left:682px;top:858.0px;line-height:16px;font-size:12px;transform:scaleX(0.9666666666666667);transform-origin:0 50%;color:#1e1e1e;">0 Warnings</div>
<div class="r" style="left:753px;top:857px;width:1px;height:18px;background:#9aa3b5;"></div>
<div class="r" style="left:757px;top:855px;width:91px;height:22px;background:#fdfbf4;border:1px solid #3a5a96;box-sizing:border-box;"></div>
<svg class="r" style="left:760px;top:858px;" width="16" height="16" viewBox="0 0 16 16"><circle cx="8" cy="8" r="7.2" fill="#1ba1e2"/><rect x="7" y="6.5" width="2.2" height="6.5" fill="#fff"/><rect x="7" y="3" width="2.2" height="2.2" fill="#fff"/></svg>
<div class="t" style="left:780px;top:858.0px;line-height:16px;font-size:12px;transform:scaleX(0.9666666666666667);transform-origin:0 50%;color:#1e1e1e;">0 Messages</div>
<div class="r" style="left:852px;top:857px;width:1px;height:18px;background:#9aa3b5;"></div>
<div class="t" style="left:860px;top:858.0px;line-height:16px;font-size:12px;transform:scaleX(0.9666666666666667);transform-origin:0 50%;color:#a0a6b4;">Clear</div>
<div class="r" style="left:897px;top:857px;width:1px;height:18px;background:#9aa3b5;"></div>
<div class="r" style="left:906px;top:856px;width:149px;height:20px;background:#ffffff;border:1px solid #cccedb;box-sizing:border-box;"></div>
<div class="t" style="left:909px;top:858.0px;line-height:16px;font-size:12px;transform:scaleX(0.9666666666666667);transform-origin:0 50%;color:#1e1e1e;">Build + IntelliSense</div>
<svg class="r" style="left:1045px;top:865px;" width="7" height="4" viewBox="0 0 7 4"><path d="M0 0 L7 0 L3.5 4Z" fill="#1e1e1e"/></svg>
<div class="r" style="left:1410px;top:856px;width:199px;height:20px;background:#fcfcfc;border:1px solid #cccedb;box-sizing:border-box;"></div>
<div class="t" style="left:1415px;top:858.0px;line-height:16px;font-size:12px;transform:scaleX(0.9666666666666667);transform-origin:0 50%;color:#6d6d6d;">Search Error List</div>
<svg class="r" style="left:1582px;top:859px;" width="13" height="13" viewBox="0 0 13 13"><circle cx="8.5" cy="4.5" r="3.6" fill="none" stroke="#555" stroke-width="1.5"/><path d="M5.8 7.2 L1 12" stroke="#555" stroke-width="2.2"/></svg>
<svg class="r" style="left:1599px;top:864px;" width="6" height="4" viewBox="0 0 6 4"><path d="M0 0 L6 0 L3 3.5Z" fill="#555"/></svg>
<div class="r" style="left:413px;top:879px;width:1197px;height:21px;background:#f5f5f5;"></div>
<div class="r" style="left:413px;top:900px;width:1197px;height:1px;background:#d5d8e2;"></div>
<div class="r" style="left:440px;top:880px;width:1px;height:20px;background:#dcdee6;"></div>
<div class="r" style="left:466px;top:880px;width:1px;height:20px;background:#dcdee6;"></div>
<div class="r" style="left:1254px;top:880px;width:1px;height:20px;background:#dcdee6;"></div>
<div class="r" style="left:1404px;top:880px;width:1px;height:20px;background:#dcdee6;"></div>
<div class="r" style="left:1554px;top:880px;width:1px;height:20px;background:#dcdee6;"></div>
<div class="r" style="left:1589px;top:880px;width:1px;height:20px;background:#dcdee6;"></div>
<div class="r" style="left:1608px;top:880px;width:1px;height:20px;background:#dcdee6;"></div>
<div class="t" style="left:470px;top:882.0px;line-height:16px;font-size:12px;transform:scaleX(0.9666666666666667);transform-origin:0 50%;color:#1e1e1e;">Description</div>
<svg class="r" style="left:539px;top:888px;" width="9" height="5" viewBox="0 0 9 5"><path d="M0 5 L4.5 0 L9 5Z" fill="#1e1e1e"/></svg>
<div class="t" style="left:1258px;top:882.0px;line-height:16px;font-size:12px;transform:scaleX(0.9666666666666667);transform-origin:0 50%;color:#1e1e1e;">Project</div>
<div class="t" style="left:1408px;top:882.0px;line-height:16px;font-size:12px;transform:scaleX(0.9666666666666667);transform-origin:0 50%;color:#1e1e1e;">File</div>
<div class="t" style="left:1558px;top:882.0px;line-height:16px;font-size:12px;transform:scaleX(0.9666666666666667);transform-origin:0 50%;color:#1e1e1e;">Line</div>
<div class="r" style="left:413px;top:901px;width:1197px;height:89px;background:#ffffff;"></div>
<div class="r" style="left:412px;top:990px;width:57px;height:21px;background:#ffffff;"></div>
<div class="t" style="left:418px;top:992.0px;line-height:16px;font-size:12px;transform:scaleX(0.9833333333333334);transform-origin:0 50%;color:#1e1e1e;">Error List</div>
<div class="r" style="left:469px;top:990px;width:51px;height:21px;background:#4d6082;"></div>
<div class="t" style="left:476px;top:993.0px;line-height:16px;font-size:12px;transform:scaleX(0.9833333333333334);transform-origin:0 50%;color:#ffffff;">Output</div>
<div class="r" style="left:0px;top:1017px;width:1920px;height:23px;background:#007acc;"></div>
<svg class="r" style="left:4px;top:1023px;" width="16" height="12" viewBox="0 0 16 12"><path d="M4.5 0.75 H15 L11.5 11.25 H1Z" fill="none" stroke="#fff" stroke-width="1.3"/></svg>
<div class="t" style="left:28px;top:1020.5px;line-height:16px;font-size:12px;transform:scaleX(0.9833333333333334);transform-origin:0 50%;color:#ffffff;">Ready</div>
<svg class="r" style="left:1495px;top:1021px;" width="16" height="16" viewBox="0 0 16 16"><rect x="0" y="0" width="16" height="13" fill="#d8dcf0"/><rect x="1" y="1" width="14" height="11" fill="#4646e0"/><rect x="0" y="12" width="16" height="4" fill="#e8c000"/><path d="M11.20 6.50 L12.51 7.40 L12.25 8.26 L10.66 8.28 L10.26 8.76 L10.56 10.32 L9.76 10.75 L8.62 9.64 L8.00 9.70 L7.10 11.01 L6.24 10.75 L6.22 9.16 L5.74 8.76 L4.18 9.06 L3.75 8.26 L4.86 7.12 L4.80 6.50 L3.49 5.60 L3.75 4.74 L5.34 4.72 L5.74 4.24 L5.44 2.68 L6.24 2.25 L7.38 3.36 L8.00 3.30 L8.90 1.99 L9.76 2.25 L9.78 3.84 L10.26 4.24 L11.82 3.94 L12.25 4.74 L11.14 5.88Z" fill="#e8e8e8"/><circle cx="8" cy="6.5" r="1.3" fill="#4646e0"/></svg>
<svg class="r" style="left:1754px;top:1022px;" width="10" height="13" viewBox="0 0 10 13"><path d="M5 12 V2 M1 5.5 L5 1.5 L9 5.5" stroke="#fff" stroke-width="1.6" fill="none"/></svg>
<div class="t" style="left:1773px;top:1020.5px;line-height:16px;font-size:12px;transform:scaleX(0.9833333333333334);transform-origin:0 50%;color:#ffffff;">Add to Source Control</div>
<svg class="r" style="left:1897px;top:1026px;" width="8" height="5" viewBox="0 0 8 5"><path d="M0 5 L4 0 L8 5Z" fill="#fff"/></svg>
<svg class="r" style="left:91px;top:492px;" width="170" height="52" viewBox="0 0 170 52"><ellipse cx="84.5" cy="26" rx="80.8" ry="22.8" fill="none" stroke="#f20a0a" stroke-width="4.5"/></svg>
<div class="r" style="left:1083px;top:416px;width:350px;height:230px;background:#f0f0f0;border:1px solid #8c8c8c;box-sizing:border-box;box-shadow:2px 4px 14px rgba(0,0,0,0.28);"></div>
<div class="r" style="left:1084px;top:417px;width:348px;height:30px;background:#ffffff;"></div>
<div class="t" style="left:1092px;top:424.0px;line-height:16px;font-size:12px;transform:scaleX(0.9666666666666667);transform-origin:0 50%;color:#000;">Set Value Dialog</div>
<svg class="r" style="left:1411px;top:425px;" width="12" height="12" viewBox="0 0 12 12"><path d="M0.5 0.5 L11.5 11.5 M11.5 0.5 L0.5 11.5" stroke="#1e1e1e" stroke-width="1.2"/></svg>
<div class="t" style="left:1095px;top:459.5px;line-height:16px;font-size:12px;transform:scaleX(0.875);transform-origin:0 50%;color:#000;">Dec:</div>
<div class="t" style="left:1095px;top:486.0px;line-height:16px;font-size:12px;transform:scaleX(0.875);transform-origin:0 50%;color:#000;">Hex:</div>
<div class="t" style="left:1095px;top:512.0px;line-height:16px;font-size:12px;transform:scaleX(0.875);transform-origin:0 50%;color:#000;">Float:</div>
<div class="t" style="left:1095px;top:564.0px;line-height:16px;font-size:12px;transform:scaleX(0.875);transform-origin:0 50%;color:#000;">Bool:</div>
<div class="t" style="left:1095px;top:590.0px;line-height:16px;font-size:12px;transform:scaleX(0.875);transform-origin:0 50%;color:#000;">Binary:</div>
<div class="t" style="left:1095px;top:616.0px;line-height:16px;font-size:12px;transform:scaleX(0.875);transform-origin:0 50%;color:#000;">Bit Size:</div>
<div class="r" style="left:1170px;top:458px;width:141px;height:20px;background:#ffffff;border:1px solid #7a7a7a;box-sizing:border-box;"></div>
<div class="t" style="left:1173px;top:459.5px;line-height:16px;font-size:12px;transform:scaleX(0.875);transform-origin:0 50%;color:#000;">1112493908</div>
<div class="r" style="left:1170px;top:484px;width:141px;height:20px;background:#ffffff;border:1px solid #0078d7;box-sizing:border-box;"></div>
<div class="t" style="left:1173px;top:485.5px;line-height:16px;font-size:12px;transform:scaleX(0.875);transform-origin:0 50%;color:#000;">0x424F4F54</div>
<div class="r" style="left:1233px;top:487px;width:1px;height:14px;background:#000;"></div>
<div class="r" style="left:1170px;top:510px;width:141px;height:20px;background:#ffffff;border:1px solid #7a7a7a;box-sizing:border-box;"></div>
<div class="t" style="left:1173px;top:511.5px;line-height:16px;font-size:12px;transform:scaleX(0.875);transform-origin:0 50%;color:#000;">51.827469</div>
<div class="r" style="left:1170px;top:536px;width:141px;height:20px;background:#f0f0f0;border:1px solid #cccccc;box-sizing:border-box;"></div>
<div class="r" style="left:1348px;top:459px;width:73px;height:18px;background:#e1e1e1;border:2px solid #0078d7;box-sizing:border-box;"></div>
<div class="t" style="left:1348px;top:460.0px;line-height:16px;font-size:12px;transform:scaleX(0.875);transform-origin:50% 50%;color:#000;width:73px;overflow:hidden;text-align:center;">OK</div>
<div class="r" style="left:1348px;top:485px;width:73px;height:18px;background:#e1e1e1;border:1px solid #adadad;box-sizing:border-box;"></div>
<div class="t" style="left:1348px;top:486.0px;line-height:16px;font-size:12px;transform:scaleX(0.875);transform-origin:50% 50%;color:#000;width:73px;overflow:hidden;text-align:center;">Cancel</div>
<div class="r" style="left:1171px;top:563px;width:49px;height:18px;background:#e1e1e1;border:1px solid #adadad;box-sizing:border-box;"></div>
<div class="t" style="left:1171px;top:564.0px;line-height:16px;font-size:12px;transform:scaleX(0.875);transform-origin:50% 50%;color:#000;width:49px;overflow:hidden;text-align:center;">0</div>
<div class="r" style="left:1231px;top:563px;width:49px;height:18px;background:#e1e1e1;border:1px solid #adadad;box-sizing:border-box;"></div>
<div class="t" style="left:1231px;top:564.0px;line-height:16px;font-size:12px;transform:scaleX(0.875);transform-origin:50% 50%;color:#000;width:49px;overflow:hidden;text-align:center;">1</div>
<div class="r" style="left:1348px;top:563px;width:73px;height:18px;background:#e1e1e1;border:1px solid #adadad;box-sizing:border-box;"></div>
<div class="t" style="left:1348px;top:564.0px;line-height:16px;font-size:12px;transform:scaleX(0.875);transform-origin:50% 50%;color:#000;width:73px;overflow:hidden;text-align:center;">Hex Edit...</div>
<div class="r" style="left:1170px;top:588px;width:209px;height:20px;background:#ffffff;border:1px solid #7a7a7a;box-sizing:border-box;"></div>
<div class="t" style="left:1173px;top:589.5px;line-height:16px;font-size:12px;transform:scaleX(0.875);transform-origin:0 50%;color:#000;">54 4F 4F 42</div>
<div class="r" style="left:1389px;top:588px;width:33px;height:20px;background:#f0f0f0;border:1px solid #7a7a7a;box-sizing:border-box;"></div>
<div class="t" style="left:1392px;top:589.5px;line-height:16px;font-size:12px;transform:scaleX(0.875);transform-origin:0 50%;color:#000;">4</div>
<svg class="r" style="left:1170px;top:618px;" width="13" height="13" viewBox="0 0 13 13"><circle cx="6.5" cy="6.5" r="6" fill="#fff" stroke="#333" stroke-width="1"/></svg>
<div class="t" style="left:1186.5px;top:616.5px;line-height:16px;font-size:12px;transform:scaleX(0.875);transform-origin:0 50%;color:#000;">1</div>
<svg class="r" style="left:1203px;top:618px;" width="13" height="13" viewBox="0 0 13 13"><circle cx="6.5" cy="6.5" r="6" fill="#fff" stroke="#333" stroke-width="1"/></svg>
<div class="t" style="left:1219px;top:616.5px;line-height:16px;font-size:12px;transform:scaleX(0.875);transform-origin:0 50%;color:#000;">8</div>
<svg class="r" style="left:1239px;top:618px;" width="13" height="13" viewBox="0 0 13 13"><circle cx="6.5" cy="6.5" r="6" fill="#fff" stroke="#333" stroke-width="1"/></svg>
<div class="t" style="left:1255px;top:616.5px;line-height:16px;font-size:12px;transform:scaleX(0.875);transform-origin:0 50%;color:#000;">16</div>
<svg class="r" style="left:1281px;top:618px;" width="13" height="13" viewBox="0 0 13 13"><circle cx="6.5" cy="6.5" r="6" fill="#fff" stroke="#333" stroke-width="1"/><circle cx="6.5" cy="6.5" r="3.2" fill="#1e1e1e"/></svg>
<div class="t" style="left:1297.5px;top:616.5px;line-height:16px;font-size:12px;transform:scaleX(0.875);transform-origin:0 50%;color:#000;">32</div>
<svg class="r" style="left:1317px;top:618px;" width="13" height="13" viewBox="0 0 13 13"><circle cx="6.5" cy="6.5" r="6" fill="#fff" stroke="#333" stroke-width="1"/></svg>
<div class="t" style="left:1333px;top:616.5px;line-height:16px;font-size:12px;transform:scaleX(0.875);transform-origin:0 50%;color:#000;">64</div>
<svg class="r" style="left:1353px;top:618px;" width="13" height="13" viewBox="0 0 13 13"><circle cx="6.5" cy="6.5" r="6" fill="#fff" stroke="#333" stroke-width="1"/></svg>
<div class="t" style="left:1369px;top:616.5px;line-height:16px;font-size:12px;transform:scaleX(0.875);transform-origin:0 50%;color:#000;">?</div>
<svg class="r" style="left:1152px;top:476px;" width="104" height="37" viewBox="0 0 104 37"><ellipse cx="52" cy="18.2" rx="48.5" ry="14.5" fill="none" stroke="#f20a0a" stroke-width="4.5"/></svg></body></html>
